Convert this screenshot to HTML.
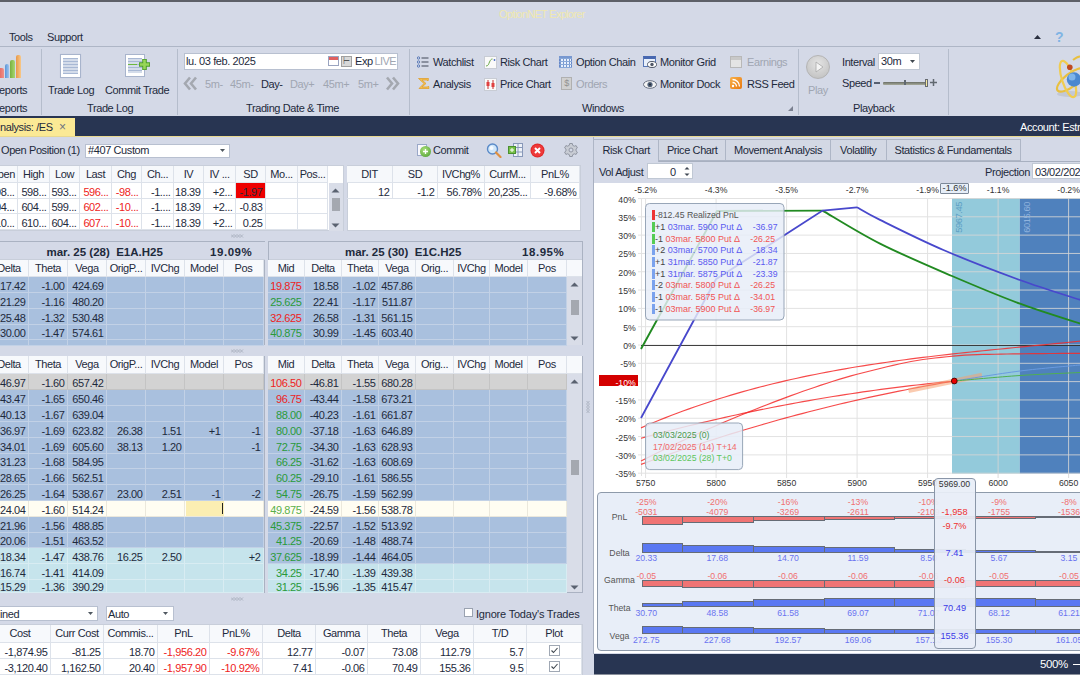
<!DOCTYPE html>
<html><head><meta charset="utf-8">
<style>
*{box-sizing:border-box;margin:0;padding:0}
html,body{width:1080px;height:675px;overflow:hidden;background:#d4d9e7;font-family:"Liberation Sans",sans-serif;font-size:11px;color:#1e2a3c;letter-spacing:-0.4px}
.a{position:absolute;white-space:nowrap}
.sep{position:absolute;width:1px;background:#b5bdcc}
.gl{position:absolute;color:#1e2a3c;font-size:11px}
.dis{color:#a0a6b2}
.c{position:absolute;overflow:hidden;white-space:nowrap}
.ch{letter-spacing:0;font-size:8.7px;line-height:10px}
</style></head><body>
<!-- top border -->
<div class="a" style="left:0;top:0;width:1080px;height:2px;background:#5d6068"></div>
<div class="a" style="left:499px;top:8px;color:#efe8b0;font-size:11px;letter-spacing:-0.7px">OptionNET Explorer</div>
<div class="a" style="left:9px;top:31px">Tools</div>
<div class="a" style="left:47px;top:31px">Support</div>
<div class="a" style="left:0;top:46px;width:1080px;height:1px;background:#aeb6c6"></div>

<!-- ribbon -->

<div class="sep" style="left:41px;top:49px;height:66px"></div>
<div class="sep" style="left:177px;top:49px;height:66px"></div>
<div class="sep" style="left:409px;top:49px;height:66px"></div>
<div class="sep" style="left:798px;top:49px;height:66px"></div>
<div class="sep" style="left:948px;top:49px;height:66px"></div>
<!-- Reports -->
<div class="a" style="left:-2px;top:68px;width:6px;height:10px;background:linear-gradient(90deg,#e0605a,#f09088);border-radius:2px 2px 0 0"></div>
<div class="a" style="left:5px;top:64px;width:4px;height:14px;background:linear-gradient(90deg,#5a94d8,#9cc4ee);border-radius:2px 2px 0 0"></div>
<div class="a" style="left:10px;top:60px;width:5px;height:18px;background:linear-gradient(90deg,#78b040,#a8d870);border-radius:2px 2px 0 0"></div>
<div class="a" style="left:16px;top:55px;width:5px;height:23px;background:linear-gradient(90deg,#e89848,#f8c888);border-radius:2px 2px 0 0"></div>
<div class="a" style="left:-1px;top:84px">eports</div>
<div class="a" style="left:-1px;top:102px">eports</div>
<!-- Trade Log -->
<div class="a" style="left:60px;top:54px;width:21px;height:24px;background:#fff;border:1px solid #a8b4cc;box-shadow:0 0 1px #c0c8d8"></div>
<div class="a" style="left:63px;top:58px;width:15px;height:16px;background:repeating-linear-gradient(180deg,#a8b8d4 0,#a8b8d4 1px,#d4dcea 1px,#d4dcea 3px)"></div>
<div class="a" style="left:48px;top:84px">Trade Log</div>
<div class="a" style="left:125px;top:54px;width:20px;height:23px;background:#fff;border:1px solid #a8b4cc"></div>
<div class="a" style="left:128px;top:58px;width:14px;height:15px;background:repeating-linear-gradient(180deg,#a8b8d4 0,#a8b8d4 1px,#d4dcea 1px,#d4dcea 3px)"></div>
<svg class="a" style="left:128px;top:55px" width="24" height="16"><path d="M0 9.5h9" stroke="#6cb83c" stroke-width="1"/><path d="M16.5 4v11M11 9.5h11" stroke="#4a9a2a" stroke-width="4.6"/><path d="M16.5 4.8v9.4M11.8 9.5h9.4" stroke="#98d658" stroke-width="2.6"/></svg>
<div class="a" style="left:105px;top:84px">Commit Trade</div>
<div class="a" style="left:87px;top:102px">Trade Log</div>
<!-- Date -->
<div class="a" style="left:184px;top:53px;width:214px;height:17px;background:#fff;border:1px solid #b8c0d0"></div>
<div class="a" style="left:186px;top:55px;color:#1e2a3c">lu. 03 feb. 2025</div>
<div class="a" style="left:328px;top:56px;width:11px;height:10px;background:linear-gradient(180deg,#e06060 0,#e06060 3px,#fff 3px);border:1px solid #9aa4c0"></div>
<div class="a" style="left:341px;top:56px;width:11px;height:11px;background:#d8d8d8;border:1px solid #a0a0a0;font-size:8px;line-height:9px;text-align:center;color:#555">⊢</div>
<div class="a" style="left:355px;top:55px">Exp</div>
<div class="a dis" style="left:374.5px;top:55px;letter-spacing:-0.6px">LIVE</div>
<svg class="a" style="left:183px;top:76px" width="15" height="15"><path d="M7 1.5L2 7.5l5 6M13 1.5L8 7.5l5 6" fill="none" stroke="#a4a8b0" stroke-width="2.6"/></svg>
<div class="a dis" style="left:205px;top:78px">5m-</div>
<div class="a dis" style="left:230px;top:78px">45m-</div>
<div class="a" style="left:261px;top:78px">Day-</div>
<div class="a dis" style="left:290px;top:78px">Day+</div>
<div class="a dis" style="left:323px;top:78px">45m+</div>
<div class="a dis" style="left:358px;top:78px">5m+</div>
<svg class="a" style="left:385px;top:76px" width="15" height="15"><path d="M2 1.5l5 6-5 6M8 1.5l5 6-5 6" fill="none" stroke="#a4a8b0" stroke-width="2.6"/></svg>
<div class="a" style="left:246px;top:102px">Trading Date &amp; Time</div>
<!-- Windows -->
<svg class="a" style="left:417px;top:56px" width="13" height="12"><circle cx="1.5" cy="2" r="1.2" fill="none" stroke="#5a7ab8"/><circle cx="1.5" cy="6" r="1.2" fill="none" stroke="#5a7ab8"/><circle cx="1.5" cy="10" r="1.2" fill="none" stroke="#5a7ab8"/><path d="M4.5 2h7M4.5 6h7M4.5 10h7" stroke="#404858" stroke-width="1.1"/></svg>
<div class="a" style="left:433px;top:56px">Watchlist</div>
<svg class="a" style="left:417px;top:77px" width="13" height="14"><path d="M1.5 1.5h10l-0.5 2.5-1-1h-5l4 3.5-4 3.5h5.5l1-1 0.5 2.5h-10l5-5z" fill="#f4c050" stroke="#e0a030" stroke-width="0.8"/></svg>
<div class="a" style="left:433px;top:78px">Analysis</div>
<div class="a" style="left:484px;top:56px;width:13px;height:13px;background:#fafafa;border:1px solid #c8ccd4"></div>
<svg class="a" style="left:484px;top:56px" width="13" height="13"><path d="M2 10c2.5 0 2.5-2 3.5-4s1.5-3 3-3" fill="none" stroke="#6aa848" stroke-width="1"/><circle cx="10.5" cy="4" r="0.9" fill="#4a6ac8"/></svg>
<div class="a" style="left:500px;top:56px">Risk Chart</div>
<div class="a" style="left:484px;top:78px;width:13px;height:13px;background:#fafafa;border:1px solid #c8ccd4"></div>
<svg class="a" style="left:484px;top:78px" width="13" height="13"><path d="M4 2v9M9 2v9" stroke="#c83030" stroke-width="1"/><rect x="2.5" y="4" width="3" height="4" fill="#e04040"/><rect x="7.5" y="5" width="3" height="4" fill="#e04040"/></svg>
<div class="a" style="left:500px;top:78px">Price Chart</div>
<div class="a" style="left:559px;top:56px;width:13px;height:12px;background:repeating-linear-gradient(90deg,#7898d0 0,#7898d0 1px,#e8f0fc 1px,#e8f0fc 3px);border:1px solid #6888c8"></div>
<div class="a" style="left:559px;top:56px;width:13px;height:12px;background:repeating-linear-gradient(180deg,#88a8d8 0,#88a8d8 1px,transparent 1px,transparent 3px);border-top:2px solid #7898d0"></div>
<div class="a" style="left:576px;top:56px">Option Chain</div>
<div class="a" style="left:561px;top:77px;width:11px;height:13px;background:#d0d0d0;border:1px solid #b0b0b0;font-size:9px;line-height:11px;text-align:center;color:#909090">$</div>
<div class="a dis" style="left:576px;top:78px">Orders</div>
<div class="a" style="left:643px;top:56px;width:13px;height:11px;background:#e8f0fc;border:1px solid #5878b8;border-top:3px solid #4868b0"></div>
<svg class="a" style="left:647px;top:61px" width="10" height="7"><ellipse cx="5" cy="3.5" rx="4.5" ry="3" fill="#fff" stroke="#505868"/><circle cx="5" cy="3.5" r="1.7" fill="#505868"/></svg>
<div class="a" style="left:660px;top:56px">Monitor Grid</div>
<svg class="a" style="left:643px;top:80px" width="14" height="9"><ellipse cx="7" cy="4.5" rx="6.5" ry="3.8" fill="#f4f4f4" stroke="#687080"/><circle cx="7" cy="4.5" r="2.6" fill="#506078"/><circle cx="7" cy="4.5" r="1" fill="#202830"/></svg>
<div class="a" style="left:660px;top:78px">Monitor Dock</div>
<div class="a" style="left:730px;top:56px;width:12px;height:12px;background:linear-gradient(180deg,#c8c8c8 0,#c8c8c8 3px,#e4e4e4 3px);border:1px solid #b8b8b8"></div>
<div class="a dis" style="left:747px;top:56px">Earnings</div>
<div class="a" style="left:730px;top:77px;width:12px;height:12px;background:linear-gradient(135deg,#f8b048,#e87810);border-radius:2px"></div>
<svg class="a" style="left:730px;top:77px" width="12" height="12"><circle cx="3" cy="9" r="1.2" fill="#fff"/><path d="M2.5 5.5a4 4 0 0 1 4 4M2.5 2.5a7 7 0 0 1 7 7" fill="none" stroke="#fff" stroke-width="1.3"/></svg>
<div class="a" style="left:747px;top:78px">RSS Feed</div>
<div class="a" style="left:582px;top:102px">Windows</div>
<svg class="a" style="left:788px;top:106px" width="6" height="6"><path d="M5 0v5h-5z" fill="#7a8090"/></svg>
<!-- Playback -->
<div class="a" style="left:806px;top:55px;width:24px;height:24px;border-radius:50%;background:radial-gradient(circle at 50% 35%,#e4e4e4,#bcbcbc);border:1px solid #b4b4b4"></div>
<svg class="a" style="left:806px;top:55px" width="24" height="24"><path d="M10 7l7 5-7 5z" fill="#f4f4f4" stroke="#a8a8a8" stroke-width="0.8"/></svg>
<div class="a dis" style="left:808px;top:84px">Play</div>
<div class="a" style="left:842px;top:56px">Interval</div>
<div class="a" style="left:878px;top:53px;width:42px;height:17px;background:#fff;border:1px solid #c0c8d4"></div>
<div class="a" style="left:881px;top:55px">30m</div>
<svg class="a" style="left:910px;top:60px" width="6" height="4"><path d="M0 0h5l-2.5 3z" fill="#404850"/></svg>
<div class="a" style="left:842px;top:77px">Speed</div>
<div class="a" style="left:874px;top:82px;width:6px;height:2px;background:#586070"></div>
<div class="a" style="left:883px;top:81.5px;width:43px;height:3px;background:linear-gradient(180deg,#6a6e66,#a8ac9c);border-radius:1px"></div>
<div class="a" style="left:904px;top:80px;width:2px;height:5px;background:#606870"></div>
<div class="a" style="left:925px;top:79px;width:3px;height:8px;background:#f4e8a0;border:1px solid #686c70"></div>
<svg class="a" style="left:930px;top:79px" width="7" height="7"><path d="M3.5 0v7M0 3.5h7" stroke="#606870" stroke-width="1.5"/></svg>
<div class="a" style="left:853px;top:102px">Playback</div>
<!-- logo -->
<svg class="a" style="left:1040px;top:50px" width="40" height="60">
<ellipse cx="30" cy="44" rx="13" ry="3" fill="#b8bcc8" opacity="0.6"/>
<ellipse cx="31" cy="30" rx="17" ry="6.5" fill="none" stroke="#e8c040" stroke-width="2.2" transform="rotate(-38 31 30)"/>
<ellipse cx="28" cy="29" rx="6" ry="19" fill="none" stroke="#f0cc50" stroke-width="2.2" transform="rotate(-18 28 29)"/>
<path d="M33 10 Q40 4 44 8" fill="none" stroke="#e8c040" stroke-width="2"/>
<circle cx="34" cy="29.5" r="7.2" fill="#4a88d0"/><circle cx="32" cy="27" r="3.5" fill="#8cc0f0" opacity="0.8"/>
<circle cx="29.8" cy="17.3" r="2.8" fill="#c04a20"/>
</svg>
<svg class="a" style="left:1034px;top:34.5px" width="7" height="4"><path d="M0 4l3.5-4 3.5 4z" fill="#2a3040"/></svg>
<div class="a" style="left:1055px;top:29px;color:#80b4e4;font-size:14px;font-weight:bold">?</div>


<!-- navy bar -->
<div class="a" style="left:0;top:116px;width:1080px;height:21px;background:#283552"></div>
<div class="a" style="left:0;top:136px;width:1080px;height:1px;background:#e8d890"></div>
<div class="a" style="left:0;top:118px;width:75px;height:18px;background:#fbe995"></div>
<div class="a" style="left:0;top:121px;color:#1e2a3c">nalysis: /ES</div>
<div class="a" style="left:59px;top:120px;color:#6b7080;font-size:12px">×</div>
<div class="a" style="left:1020px;top:121px;color:#fff">Account: Estr</div>

<div class="a" style="left:1px;top:144px">Open Position (1)</div>
<div class="a" style="left:85px;top:143.5px;width:145px;height:14px;background:#fff;border:1px solid #b8c0d0"></div>
<div class="a" style="left:88px;top:144px">#407 Custom</div>
<svg class="a" style="left:220px;top:149px" width="6" height="4"><path d="M0 0h5l-2.5 3z" fill="#505860"/></svg>
<div class="a" style="left:417px;top:143.5px;width:10px;height:12px;background:#f8f8fc;border:1px solid #9aa8c8"></div>
<div class="a" style="left:419.5px;top:146px;width:11px;height:11px;border-radius:50%;background:radial-gradient(circle at 40% 35%,#a8e078,#4a9a30)"></div>
<svg class="a" style="left:419.5px;top:146px" width="11" height="11"><path d="M5.5 3v5M3 5.5h5" stroke="#fff" stroke-width="1.3"/></svg>
<div class="a" style="left:433px;top:144px">Commit</div>
<svg class="a" style="left:486px;top:143px" width="16" height="15"><circle cx="6.5" cy="6" r="5" fill="#cfe6fa" stroke="#5a8ac8" stroke-width="1.4"/><circle cx="5.5" cy="5" r="2" fill="#fff" opacity="0.8"/><path d="M10 9.5l4.5 4.5" stroke="#e09040" stroke-width="2.2" stroke-linecap="round"/></svg>
<svg class="a" style="left:508px;top:143px" width="15" height="14"><rect x="5.5" y="0.5" width="9" height="13" fill="#eef2f8" stroke="#8898b8"/><path d="M5.5 4.5h9M5.5 9h9M10 0.5v13" stroke="#8898b8"/><rect x="0.5" y="3.5" width="7" height="7" fill="#78c048" stroke="#4a9030"/><path d="M4 5v4M2 7h4" stroke="#fff" stroke-width="1"/></svg>
<svg class="a" style="left:530px;top:143px" width="15" height="15"><circle cx="7.5" cy="7.5" r="7" fill="#e02828"/><circle cx="7.5" cy="7.5" r="6" fill="#ee3a3a"/><path d="M5 5l5 5M10 5l-5 5" stroke="#fff" stroke-width="2"/></svg>
<svg class="a" style="left:564px;top:143px" width="14" height="14"><g transform="translate(7 7)"><path d="M-1.3 -6.5h2.6l.4 1.8 1.6.9 1.8-.6 1.3 2.3-1.4 1.2v1.8l1.4 1.2-1.3 2.3-1.8-.6-1.6.9-.4 1.8h-2.6l-.4-1.8-1.6-.9-1.8.6-1.3-2.3 1.4-1.2v-1.8l-1.4-1.2 1.3-2.3 1.8.6 1.6-.9z" fill="#c8ccd4" stroke="#8a909c" stroke-width="0.9"/><circle r="2" fill="#d4d9e7" stroke="#8a909c" stroke-width="0.9"/></g></svg>
<div class="a" style="left:0;top:165px;width:343.5px;height:66px;background:#fff;border-top:1px solid #c8ceda;border-right:1px solid #c8ceda;border-bottom:1px solid #c8ceda"></div>
<div class="c" style="left:-12px;top:166px;width:30px;height:17px;line-height:19px;background:#f6f8fb;border-right:1px solid #dde2ea;border-bottom:1px solid #dde2ea;text-align:right;padding-right:2px;line-height:17px">pen</div>
<div class="c" style="left:18px;top:166px;width:32px;height:17px;line-height:19px;background:#f6f8fb;border-right:1px solid #dde2ea;border-bottom:1px solid #dde2ea;text-align:center;line-height:17px">High</div>
<div class="c" style="left:50px;top:166px;width:30px;height:17px;line-height:19px;background:#f6f8fb;border-right:1px solid #dde2ea;border-bottom:1px solid #dde2ea;text-align:center;line-height:17px">Low</div>
<div class="c" style="left:80px;top:166px;width:32px;height:17px;line-height:19px;background:#f6f8fb;border-right:1px solid #dde2ea;border-bottom:1px solid #dde2ea;text-align:center;line-height:17px">Last</div>
<div class="c" style="left:112px;top:166px;width:30px;height:17px;line-height:19px;background:#f6f8fb;border-right:1px solid #dde2ea;border-bottom:1px solid #dde2ea;text-align:center;line-height:17px">Chg</div>
<div class="c" style="left:142px;top:166px;width:32px;height:17px;line-height:19px;background:#f6f8fb;border-right:1px solid #dde2ea;border-bottom:1px solid #dde2ea;text-align:center;line-height:17px">Ch...</div>
<div class="c" style="left:174px;top:166px;width:30px;height:17px;line-height:19px;background:#f6f8fb;border-right:1px solid #dde2ea;border-bottom:1px solid #dde2ea;text-align:center;line-height:17px">IV</div>
<div class="c" style="left:204px;top:166px;width:32px;height:17px;line-height:19px;background:#f6f8fb;border-right:1px solid #dde2ea;border-bottom:1px solid #dde2ea;text-align:center;line-height:17px">IV ...</div>
<div class="c" style="left:236px;top:166px;width:30px;height:17px;line-height:19px;background:#f6f8fb;border-right:1px solid #dde2ea;border-bottom:1px solid #dde2ea;text-align:center;line-height:17px">SD</div>
<div class="c" style="left:266px;top:166px;width:32px;height:17px;line-height:19px;background:#f6f8fb;border-right:1px solid #dde2ea;border-bottom:1px solid #dde2ea;text-align:center;line-height:17px">Mo...</div>
<div class="c" style="left:298px;top:166px;width:30px;height:17px;line-height:19px;background:#f6f8fb;border-right:1px solid #dde2ea;border-bottom:1px solid #dde2ea;text-align:center;line-height:17px">Pos...</div>
<div class="c" style="left:-12px;top:183px;width:30px;height:16px;line-height:18px;border-right:1px solid #dde2ea;border-bottom:1px solid #dde2ea;text-align:right;padding-right:2.5px;">598...</div>
<div class="c" style="left:18px;top:183px;width:32px;height:16px;line-height:18px;border-right:1px solid #dde2ea;border-bottom:1px solid #dde2ea;text-align:right;padding-right:2.5px;">598...</div>
<div class="c" style="left:50px;top:183px;width:30px;height:16px;line-height:18px;border-right:1px solid #dde2ea;border-bottom:1px solid #dde2ea;text-align:right;padding-right:2.5px;">593...</div>
<div class="c" style="left:80px;top:183px;width:32px;height:16px;line-height:18px;border-right:1px solid #dde2ea;border-bottom:1px solid #dde2ea;text-align:right;padding-right:2.5px;color:#ee2222;">596...</div>
<div class="c" style="left:112px;top:183px;width:30px;height:16px;line-height:18px;border-right:1px solid #dde2ea;border-bottom:1px solid #dde2ea;text-align:right;padding-right:2.5px;color:#ee2222;">-98...</div>
<div class="c" style="left:142px;top:183px;width:32px;height:16px;line-height:18px;border-right:1px solid #dde2ea;border-bottom:1px solid #dde2ea;text-align:right;padding-right:2.5px;">-1....</div>
<div class="c" style="left:174px;top:183px;width:30px;height:16px;line-height:18px;border-right:1px solid #dde2ea;border-bottom:1px solid #dde2ea;text-align:right;padding-right:2.5px;">18.39</div>
<div class="c" style="left:204px;top:183px;width:32px;height:16px;line-height:18px;border-right:1px solid #dde2ea;border-bottom:1px solid #dde2ea;text-align:right;padding-right:2.5px;">+2...</div>
<div class="c" style="left:236px;top:183px;width:30px;height:16px;line-height:18px;background:#ee0000;border-right:1px solid #dde2ea;border-bottom:1px solid #dde2ea;text-align:right;padding-right:2.5px;">-1.97</div>
<div class="c" style="left:266px;top:183px;width:32px;height:16px;line-height:18px;border-right:1px solid #dde2ea;border-bottom:1px solid #dde2ea;text-align:right;padding-right:2.5px;"></div>
<div class="c" style="left:298px;top:183px;width:30px;height:16px;line-height:18px;border-right:1px solid #dde2ea;border-bottom:1px solid #dde2ea;text-align:right;padding-right:2.5px;"></div>
<div class="c" style="left:-12px;top:199px;width:30px;height:15px;line-height:17px;border-right:1px solid #dde2ea;border-bottom:1px solid #dde2ea;text-align:right;padding-right:2.5px;">604...</div>
<div class="c" style="left:18px;top:199px;width:32px;height:15px;line-height:17px;border-right:1px solid #dde2ea;border-bottom:1px solid #dde2ea;text-align:right;padding-right:2.5px;">604...</div>
<div class="c" style="left:50px;top:199px;width:30px;height:15px;line-height:17px;border-right:1px solid #dde2ea;border-bottom:1px solid #dde2ea;text-align:right;padding-right:2.5px;">599...</div>
<div class="c" style="left:80px;top:199px;width:32px;height:15px;line-height:17px;border-right:1px solid #dde2ea;border-bottom:1px solid #dde2ea;text-align:right;padding-right:2.5px;color:#ee2222;">602...</div>
<div class="c" style="left:112px;top:199px;width:30px;height:15px;line-height:17px;border-right:1px solid #dde2ea;border-bottom:1px solid #dde2ea;text-align:right;padding-right:2.5px;color:#ee2222;">-10...</div>
<div class="c" style="left:142px;top:199px;width:32px;height:15px;line-height:17px;border-right:1px solid #dde2ea;border-bottom:1px solid #dde2ea;text-align:right;padding-right:2.5px;">-1....</div>
<div class="c" style="left:174px;top:199px;width:30px;height:15px;line-height:17px;border-right:1px solid #dde2ea;border-bottom:1px solid #dde2ea;text-align:right;padding-right:2.5px;">18.39</div>
<div class="c" style="left:204px;top:199px;width:32px;height:15px;line-height:17px;border-right:1px solid #dde2ea;border-bottom:1px solid #dde2ea;text-align:right;padding-right:2.5px;">+2...</div>
<div class="c" style="left:236px;top:199px;width:30px;height:15px;line-height:17px;border-right:1px solid #dde2ea;border-bottom:1px solid #dde2ea;text-align:right;padding-right:2.5px;">-0.83</div>
<div class="c" style="left:266px;top:199px;width:32px;height:15px;line-height:17px;border-right:1px solid #dde2ea;border-bottom:1px solid #dde2ea;text-align:right;padding-right:2.5px;"></div>
<div class="c" style="left:298px;top:199px;width:30px;height:15px;line-height:17px;border-right:1px solid #dde2ea;border-bottom:1px solid #dde2ea;text-align:right;padding-right:2.5px;"></div>
<div class="c" style="left:-12px;top:214px;width:30px;height:16px;line-height:18px;border-right:1px solid #dde2ea;border-bottom:1px solid #dde2ea;text-align:right;padding-right:2.5px;">610...</div>
<div class="c" style="left:18px;top:214px;width:32px;height:16px;line-height:18px;border-right:1px solid #dde2ea;border-bottom:1px solid #dde2ea;text-align:right;padding-right:2.5px;">610...</div>
<div class="c" style="left:50px;top:214px;width:30px;height:16px;line-height:18px;border-right:1px solid #dde2ea;border-bottom:1px solid #dde2ea;text-align:right;padding-right:2.5px;">604...</div>
<div class="c" style="left:80px;top:214px;width:32px;height:16px;line-height:18px;border-right:1px solid #dde2ea;border-bottom:1px solid #dde2ea;text-align:right;padding-right:2.5px;color:#ee2222;">607...</div>
<div class="c" style="left:112px;top:214px;width:30px;height:16px;line-height:18px;border-right:1px solid #dde2ea;border-bottom:1px solid #dde2ea;text-align:right;padding-right:2.5px;color:#ee2222;">-10...</div>
<div class="c" style="left:142px;top:214px;width:32px;height:16px;line-height:18px;border-right:1px solid #dde2ea;border-bottom:1px solid #dde2ea;text-align:right;padding-right:2.5px;">-1....</div>
<div class="c" style="left:174px;top:214px;width:30px;height:16px;line-height:18px;border-right:1px solid #dde2ea;border-bottom:1px solid #dde2ea;text-align:right;padding-right:2.5px;">18.39</div>
<div class="c" style="left:204px;top:214px;width:32px;height:16px;line-height:18px;border-right:1px solid #dde2ea;border-bottom:1px solid #dde2ea;text-align:right;padding-right:2.5px;">+2...</div>
<div class="c" style="left:236px;top:214px;width:30px;height:16px;line-height:18px;border-right:1px solid #dde2ea;border-bottom:1px solid #dde2ea;text-align:right;padding-right:2.5px;">0.25</div>
<div class="c" style="left:266px;top:214px;width:32px;height:16px;line-height:18px;border-right:1px solid #dde2ea;border-bottom:1px solid #dde2ea;text-align:right;padding-right:2.5px;"></div>
<div class="c" style="left:298px;top:214px;width:30px;height:16px;line-height:18px;border-right:1px solid #dde2ea;border-bottom:1px solid #dde2ea;text-align:right;padding-right:2.5px;"></div>
<div class="a" style="left:328.5px;top:183px;width:14.5px;height:47.5px;background:#d9dde8"></div>
<svg class="a" style="left:331px;top:188px" width="9" height="5"><path d="M0.5 4.5l4-4 4 4z" fill="#5a6270"/></svg>
<div class="a" style="left:331.5px;top:198px;width:8px;height:13px;background:#a4a8b0"></div>
<svg class="a" style="left:331px;top:223px" width="9" height="5"><path d="M0.5 0.5l4 4 4-4z" fill="#5a6270"/></svg>
<div class="a" style="left:346.5px;top:165px;width:234px;height:66px;background:#fff;border:1px solid #c8ceda"></div>
<div class="c" style="left:347px;top:166px;width:46px;height:17px;line-height:19px;background:#f6f8fb;border-right:1px solid #dde2ea;border-bottom:1px solid #dde2ea;text-align:center;line-height:17px">DIT</div>
<div class="c" style="left:393px;top:166px;width:45px;height:17px;line-height:19px;background:#f6f8fb;border-right:1px solid #dde2ea;border-bottom:1px solid #dde2ea;text-align:center;line-height:17px">SD</div>
<div class="c" style="left:438px;top:166px;width:47px;height:17px;line-height:19px;background:#f6f8fb;border-right:1px solid #dde2ea;border-bottom:1px solid #dde2ea;text-align:center;line-height:17px">IVChg%</div>
<div class="c" style="left:485px;top:166px;width:46px;height:17px;line-height:19px;background:#f6f8fb;border-right:1px solid #dde2ea;border-bottom:1px solid #dde2ea;text-align:center;line-height:17px">CurrM...</div>
<div class="c" style="left:531px;top:166px;width:49px;height:17px;line-height:19px;background:#f6f8fb;border-right:1px solid #dde2ea;border-bottom:1px solid #dde2ea;text-align:center;line-height:17px">PnL%</div>
<div class="c" style="left:347px;top:183px;width:46px;height:16px;line-height:18px;border-right:1px solid #dde2ea;border-bottom:1px solid #dde2ea;text-align:right;padding-right:2.5px;">12</div>
<div class="c" style="left:393px;top:183px;width:45px;height:16px;line-height:18px;border-right:1px solid #dde2ea;border-bottom:1px solid #dde2ea;text-align:right;padding-right:2.5px;">-1.2</div>
<div class="c" style="left:438px;top:183px;width:47px;height:16px;line-height:18px;border-right:1px solid #dde2ea;border-bottom:1px solid #dde2ea;text-align:right;padding-right:2.5px;">56.78%</div>
<div class="c" style="left:485px;top:183px;width:46px;height:16px;line-height:18px;border-right:1px solid #dde2ea;border-bottom:1px solid #dde2ea;text-align:right;padding-right:2.5px;">20,235...</div>
<div class="c" style="left:531px;top:183px;width:49px;height:16px;line-height:18px;border-right:1px solid #dde2ea;border-bottom:1px solid #dde2ea;text-align:right;padding-right:2.5px;">-9.68%</div>
<svg class="a" style="left:231px;top:233.5px" width="13" height="4"><path d="M0 0.5l3 3M3 0.5l-3 3M3 0.5l3 3M6 0.5l-3 3M6 0.5l3 3M9 0.5l-3 3M9 0.5l3 3M12 0.5l-3 3" stroke="#a4acbb" stroke-width="0.8" fill="none"/></svg>
<svg class="a" style="left:231px;top:348.5px" width="13" height="4"><path d="M0 0.5l3 3M3 0.5l-3 3M3 0.5l3 3M6 0.5l-3 3M6 0.5l3 3M9 0.5l-3 3M9 0.5l3 3M12 0.5l-3 3" stroke="#a4acbb" stroke-width="0.8" fill="none"/></svg>
<svg class="a" style="left:231px;top:596.5px" width="13" height="4"><path d="M0 0.5l3 3M3 0.5l-3 3M3 0.5l3 3M6 0.5l-3 3M6 0.5l3 3M9 0.5l-3 3M9 0.5l3 3M12 0.5l-3 3" stroke="#a4acbb" stroke-width="0.8" fill="none"/></svg>
<svg class="a" style="left:586px;top:401px" width="4" height="13"><path d="M0.5 0l3 3M0.5 3l3 -3M0.5 3l3 3M0.5 6l3 -3M0.5 6l3 3M0.5 9l3 -3M0.5 9l3 3M0.5 12l3 -3" stroke="#a4acbb" stroke-width="0.8" fill="none"/></svg>
<div class="a" style="left:-2px;top:241.3px;width:267px;height:104.2px;border:1px solid #aab2c2;background:#fff"></div>
<div class="a" style="left:267.5px;top:241.3px;width:315px;height:104.2px;border:1px solid #aab2c2;background:#fff"></div>
<div class="a" style="left:0;top:242.3px;width:264.5px;height:18px;background:#d4d9e7;border-bottom:1px solid #c8ceda"></div>
<div class="a" style="left:268.5px;top:242.3px;width:313.5px;height:18px;background:#d4d9e7;border-bottom:1px solid #c8ceda"></div>
<div class="a" style="left:46.5px;top:245.5px;font-weight:bold;letter-spacing:0;font-size:11.5px">mar. 25 (28)&nbsp; E1A.H25</div>
<div class="a" style="left:210px;top:245.5px;font-weight:bold;letter-spacing:0.55px;font-size:11.5px">19.09%</div>
<div class="a" style="left:345px;top:245.5px;font-weight:bold;letter-spacing:0;font-size:11.5px">mar. 25 (30)&nbsp; E1C.H25</div>
<div class="a" style="left:522px;top:245.5px;font-weight:bold;letter-spacing:0.55px;font-size:11.5px">18.95%</div>
<div class="c" style="left:-10px;top:260px;width:39px;height:17px;line-height:19px;background:#f7f9fc;border-right:1px solid #dde2ea;border-bottom:1px solid #dde2ea;text-align:center;line-height:17px">Delta</div>
<div class="c" style="left:29px;top:260px;width:39px;height:17px;line-height:19px;background:#f7f9fc;border-right:1px solid #dde2ea;border-bottom:1px solid #dde2ea;text-align:center;line-height:17px">Theta</div>
<div class="c" style="left:68px;top:260px;width:39px;height:17px;line-height:19px;background:#f7f9fc;border-right:1px solid #dde2ea;border-bottom:1px solid #dde2ea;text-align:center;line-height:17px">Vega</div>
<div class="c" style="left:107px;top:260px;width:39px;height:17px;line-height:19px;background:#f7f9fc;border-right:1px solid #dde2ea;border-bottom:1px solid #dde2ea;text-align:center;line-height:17px">OrigP...</div>
<div class="c" style="left:146px;top:260px;width:39px;height:17px;line-height:19px;background:#f7f9fc;border-right:1px solid #dde2ea;border-bottom:1px solid #dde2ea;text-align:center;line-height:17px">IVChg</div>
<div class="c" style="left:185px;top:260px;width:39px;height:17px;line-height:19px;background:#f7f9fc;border-right:1px solid #dde2ea;border-bottom:1px solid #dde2ea;text-align:center;line-height:17px">Model</div>
<div class="c" style="left:224px;top:260px;width:40px;height:17px;line-height:19px;background:#f7f9fc;border-right:1px solid #dde2ea;border-bottom:1px solid #dde2ea;text-align:center;line-height:17px">Pos</div>
<div class="c" style="left:268px;top:260px;width:37px;height:17px;line-height:19px;background:#f7f9fc;border-right:1px solid #dde2ea;border-bottom:1px solid #dde2ea;text-align:center;line-height:17px">Mid</div>
<div class="c" style="left:305px;top:260px;width:37px;height:17px;line-height:19px;background:#f7f9fc;border-right:1px solid #dde2ea;border-bottom:1px solid #dde2ea;text-align:center;line-height:17px">Delta</div>
<div class="c" style="left:342px;top:260px;width:37px;height:17px;line-height:19px;background:#f7f9fc;border-right:1px solid #dde2ea;border-bottom:1px solid #dde2ea;text-align:center;line-height:17px">Theta</div>
<div class="c" style="left:379px;top:260px;width:37px;height:17px;line-height:19px;background:#f7f9fc;border-right:1px solid #dde2ea;border-bottom:1px solid #dde2ea;text-align:center;line-height:17px">Vega</div>
<div class="c" style="left:416px;top:260px;width:38px;height:17px;line-height:19px;background:#f7f9fc;border-right:1px solid #dde2ea;border-bottom:1px solid #dde2ea;text-align:center;line-height:17px">Orig...</div>
<div class="c" style="left:454px;top:260px;width:36px;height:17px;line-height:19px;background:#f7f9fc;border-right:1px solid #dde2ea;border-bottom:1px solid #dde2ea;text-align:center;line-height:17px">IVChg</div>
<div class="c" style="left:490px;top:260px;width:38px;height:17px;line-height:19px;background:#f7f9fc;border-right:1px solid #dde2ea;border-bottom:1px solid #dde2ea;text-align:center;line-height:17px">Model</div>
<div class="c" style="left:528px;top:260px;width:39px;height:17px;line-height:19px;background:#f7f9fc;border-right:1px solid #dde2ea;border-bottom:1px solid #dde2ea;text-align:center;line-height:17px">Pos</div>
<div class="c" style="left:567px;top:260px;width:15px;height:17px;line-height:19px;background:#f7f9fc;border-bottom:1px solid #dde2ea;text-align:center;"></div>
<div class="c" style="left:-10px;top:277px;width:39px;height:16px;line-height:18px;background:#a9c0de;border-right:1px solid #c2d1e6;border-bottom:1px solid #c2d1e6;text-align:right;padding-right:2.5px;">17.42</div>
<div class="c" style="left:29px;top:277px;width:39px;height:16px;line-height:18px;background:#a9c0de;border-right:1px solid #c2d1e6;border-bottom:1px solid #c2d1e6;text-align:right;padding-right:2.5px;">-1.00</div>
<div class="c" style="left:68px;top:277px;width:39px;height:16px;line-height:18px;background:#a9c0de;border-right:1px solid #c2d1e6;border-bottom:1px solid #c2d1e6;text-align:right;padding-right:2.5px;">424.69</div>
<div class="c" style="left:107px;top:277px;width:39px;height:16px;line-height:18px;background:#a9c0de;border-right:1px solid #c2d1e6;border-bottom:1px solid #c2d1e6;text-align:right;padding-right:2.5px;"></div>
<div class="c" style="left:146px;top:277px;width:39px;height:16px;line-height:18px;background:#a9c0de;border-right:1px solid #c2d1e6;border-bottom:1px solid #c2d1e6;text-align:right;padding-right:2.5px;"></div>
<div class="c" style="left:185px;top:277px;width:39px;height:16px;line-height:18px;background:#a9c0de;border-right:1px solid #c2d1e6;border-bottom:1px solid #c2d1e6;text-align:right;padding-right:2.5px;"></div>
<div class="c" style="left:224px;top:277px;width:40px;height:16px;line-height:18px;background:#a9c0de;border-right:1px solid #c2d1e6;border-bottom:1px solid #c2d1e6;text-align:right;padding-right:2.5px;"></div>
<div class="c" style="left:268px;top:277px;width:37px;height:16px;line-height:18px;background:#a9c0de;border-right:1px solid #c2d1e6;border-bottom:1px solid #c2d1e6;text-align:right;padding-right:2.5px;color:#ee2222;">19.875</div>
<div class="c" style="left:305px;top:277px;width:37px;height:16px;line-height:18px;background:#a9c0de;border-right:1px solid #c2d1e6;border-bottom:1px solid #c2d1e6;text-align:right;padding-right:2.5px;">18.58</div>
<div class="c" style="left:342px;top:277px;width:37px;height:16px;line-height:18px;background:#a9c0de;border-right:1px solid #c2d1e6;border-bottom:1px solid #c2d1e6;text-align:right;padding-right:2.5px;">-1.02</div>
<div class="c" style="left:379px;top:277px;width:37px;height:16px;line-height:18px;background:#a9c0de;border-right:1px solid #c2d1e6;border-bottom:1px solid #c2d1e6;text-align:right;padding-right:2.5px;">457.86</div>
<div class="c" style="left:416px;top:277px;width:38px;height:16px;line-height:18px;background:#a9c0de;border-right:1px solid #c2d1e6;border-bottom:1px solid #c2d1e6;text-align:right;padding-right:2.5px;"></div>
<div class="c" style="left:454px;top:277px;width:36px;height:16px;line-height:18px;background:#a9c0de;border-right:1px solid #c2d1e6;border-bottom:1px solid #c2d1e6;text-align:right;padding-right:2.5px;"></div>
<div class="c" style="left:490px;top:277px;width:38px;height:16px;line-height:18px;background:#a9c0de;border-right:1px solid #c2d1e6;border-bottom:1px solid #c2d1e6;text-align:right;padding-right:2.5px;"></div>
<div class="c" style="left:528px;top:277px;width:39px;height:16px;line-height:18px;background:#a9c0de;border-right:1px solid #c2d1e6;border-bottom:1px solid #c2d1e6;text-align:right;padding-right:2.5px;"></div>
<div class="c" style="left:-10px;top:293px;width:39px;height:16px;line-height:18px;background:#a9c0de;border-right:1px solid #c2d1e6;border-bottom:1px solid #c2d1e6;text-align:right;padding-right:2.5px;">21.29</div>
<div class="c" style="left:29px;top:293px;width:39px;height:16px;line-height:18px;background:#a9c0de;border-right:1px solid #c2d1e6;border-bottom:1px solid #c2d1e6;text-align:right;padding-right:2.5px;">-1.16</div>
<div class="c" style="left:68px;top:293px;width:39px;height:16px;line-height:18px;background:#a9c0de;border-right:1px solid #c2d1e6;border-bottom:1px solid #c2d1e6;text-align:right;padding-right:2.5px;">480.20</div>
<div class="c" style="left:107px;top:293px;width:39px;height:16px;line-height:18px;background:#a9c0de;border-right:1px solid #c2d1e6;border-bottom:1px solid #c2d1e6;text-align:right;padding-right:2.5px;"></div>
<div class="c" style="left:146px;top:293px;width:39px;height:16px;line-height:18px;background:#a9c0de;border-right:1px solid #c2d1e6;border-bottom:1px solid #c2d1e6;text-align:right;padding-right:2.5px;"></div>
<div class="c" style="left:185px;top:293px;width:39px;height:16px;line-height:18px;background:#a9c0de;border-right:1px solid #c2d1e6;border-bottom:1px solid #c2d1e6;text-align:right;padding-right:2.5px;"></div>
<div class="c" style="left:224px;top:293px;width:40px;height:16px;line-height:18px;background:#a9c0de;border-right:1px solid #c2d1e6;border-bottom:1px solid #c2d1e6;text-align:right;padding-right:2.5px;"></div>
<div class="c" style="left:268px;top:293px;width:37px;height:16px;line-height:18px;background:#a9c0de;border-right:1px solid #c2d1e6;border-bottom:1px solid #c2d1e6;text-align:right;padding-right:2.5px;color:#2a9a3a;">25.625</div>
<div class="c" style="left:305px;top:293px;width:37px;height:16px;line-height:18px;background:#a9c0de;border-right:1px solid #c2d1e6;border-bottom:1px solid #c2d1e6;text-align:right;padding-right:2.5px;">22.41</div>
<div class="c" style="left:342px;top:293px;width:37px;height:16px;line-height:18px;background:#a9c0de;border-right:1px solid #c2d1e6;border-bottom:1px solid #c2d1e6;text-align:right;padding-right:2.5px;">-1.17</div>
<div class="c" style="left:379px;top:293px;width:37px;height:16px;line-height:18px;background:#a9c0de;border-right:1px solid #c2d1e6;border-bottom:1px solid #c2d1e6;text-align:right;padding-right:2.5px;">511.87</div>
<div class="c" style="left:416px;top:293px;width:38px;height:16px;line-height:18px;background:#a9c0de;border-right:1px solid #c2d1e6;border-bottom:1px solid #c2d1e6;text-align:right;padding-right:2.5px;"></div>
<div class="c" style="left:454px;top:293px;width:36px;height:16px;line-height:18px;background:#a9c0de;border-right:1px solid #c2d1e6;border-bottom:1px solid #c2d1e6;text-align:right;padding-right:2.5px;"></div>
<div class="c" style="left:490px;top:293px;width:38px;height:16px;line-height:18px;background:#a9c0de;border-right:1px solid #c2d1e6;border-bottom:1px solid #c2d1e6;text-align:right;padding-right:2.5px;"></div>
<div class="c" style="left:528px;top:293px;width:39px;height:16px;line-height:18px;background:#a9c0de;border-right:1px solid #c2d1e6;border-bottom:1px solid #c2d1e6;text-align:right;padding-right:2.5px;"></div>
<div class="c" style="left:-10px;top:309px;width:39px;height:16px;line-height:18px;background:#a9c0de;border-right:1px solid #c2d1e6;border-bottom:1px solid #c2d1e6;text-align:right;padding-right:2.5px;">25.48</div>
<div class="c" style="left:29px;top:309px;width:39px;height:16px;line-height:18px;background:#a9c0de;border-right:1px solid #c2d1e6;border-bottom:1px solid #c2d1e6;text-align:right;padding-right:2.5px;">-1.32</div>
<div class="c" style="left:68px;top:309px;width:39px;height:16px;line-height:18px;background:#a9c0de;border-right:1px solid #c2d1e6;border-bottom:1px solid #c2d1e6;text-align:right;padding-right:2.5px;">530.48</div>
<div class="c" style="left:107px;top:309px;width:39px;height:16px;line-height:18px;background:#a9c0de;border-right:1px solid #c2d1e6;border-bottom:1px solid #c2d1e6;text-align:right;padding-right:2.5px;"></div>
<div class="c" style="left:146px;top:309px;width:39px;height:16px;line-height:18px;background:#a9c0de;border-right:1px solid #c2d1e6;border-bottom:1px solid #c2d1e6;text-align:right;padding-right:2.5px;"></div>
<div class="c" style="left:185px;top:309px;width:39px;height:16px;line-height:18px;background:#a9c0de;border-right:1px solid #c2d1e6;border-bottom:1px solid #c2d1e6;text-align:right;padding-right:2.5px;"></div>
<div class="c" style="left:224px;top:309px;width:40px;height:16px;line-height:18px;background:#a9c0de;border-right:1px solid #c2d1e6;border-bottom:1px solid #c2d1e6;text-align:right;padding-right:2.5px;"></div>
<div class="c" style="left:268px;top:309px;width:37px;height:16px;line-height:18px;background:#a9c0de;border-right:1px solid #c2d1e6;border-bottom:1px solid #c2d1e6;text-align:right;padding-right:2.5px;color:#ee2222;">32.625</div>
<div class="c" style="left:305px;top:309px;width:37px;height:16px;line-height:18px;background:#a9c0de;border-right:1px solid #c2d1e6;border-bottom:1px solid #c2d1e6;text-align:right;padding-right:2.5px;">26.58</div>
<div class="c" style="left:342px;top:309px;width:37px;height:16px;line-height:18px;background:#a9c0de;border-right:1px solid #c2d1e6;border-bottom:1px solid #c2d1e6;text-align:right;padding-right:2.5px;">-1.31</div>
<div class="c" style="left:379px;top:309px;width:37px;height:16px;line-height:18px;background:#a9c0de;border-right:1px solid #c2d1e6;border-bottom:1px solid #c2d1e6;text-align:right;padding-right:2.5px;">561.15</div>
<div class="c" style="left:416px;top:309px;width:38px;height:16px;line-height:18px;background:#a9c0de;border-right:1px solid #c2d1e6;border-bottom:1px solid #c2d1e6;text-align:right;padding-right:2.5px;"></div>
<div class="c" style="left:454px;top:309px;width:36px;height:16px;line-height:18px;background:#a9c0de;border-right:1px solid #c2d1e6;border-bottom:1px solid #c2d1e6;text-align:right;padding-right:2.5px;"></div>
<div class="c" style="left:490px;top:309px;width:38px;height:16px;line-height:18px;background:#a9c0de;border-right:1px solid #c2d1e6;border-bottom:1px solid #c2d1e6;text-align:right;padding-right:2.5px;"></div>
<div class="c" style="left:528px;top:309px;width:39px;height:16px;line-height:18px;background:#a9c0de;border-right:1px solid #c2d1e6;border-bottom:1px solid #c2d1e6;text-align:right;padding-right:2.5px;"></div>
<div class="c" style="left:-10px;top:325px;width:39px;height:15px;line-height:17px;background:#a9c0de;border-right:1px solid #c2d1e6;border-bottom:1px solid #c2d1e6;text-align:right;padding-right:2.5px;">30.00</div>
<div class="c" style="left:29px;top:325px;width:39px;height:15px;line-height:17px;background:#a9c0de;border-right:1px solid #c2d1e6;border-bottom:1px solid #c2d1e6;text-align:right;padding-right:2.5px;">-1.47</div>
<div class="c" style="left:68px;top:325px;width:39px;height:15px;line-height:17px;background:#a9c0de;border-right:1px solid #c2d1e6;border-bottom:1px solid #c2d1e6;text-align:right;padding-right:2.5px;">574.61</div>
<div class="c" style="left:107px;top:325px;width:39px;height:15px;line-height:17px;background:#a9c0de;border-right:1px solid #c2d1e6;border-bottom:1px solid #c2d1e6;text-align:right;padding-right:2.5px;"></div>
<div class="c" style="left:146px;top:325px;width:39px;height:15px;line-height:17px;background:#a9c0de;border-right:1px solid #c2d1e6;border-bottom:1px solid #c2d1e6;text-align:right;padding-right:2.5px;"></div>
<div class="c" style="left:185px;top:325px;width:39px;height:15px;line-height:17px;background:#a9c0de;border-right:1px solid #c2d1e6;border-bottom:1px solid #c2d1e6;text-align:right;padding-right:2.5px;"></div>
<div class="c" style="left:224px;top:325px;width:40px;height:15px;line-height:17px;background:#a9c0de;border-right:1px solid #c2d1e6;border-bottom:1px solid #c2d1e6;text-align:right;padding-right:2.5px;"></div>
<div class="c" style="left:268px;top:325px;width:37px;height:15px;line-height:17px;background:#a9c0de;border-right:1px solid #c2d1e6;border-bottom:1px solid #c2d1e6;text-align:right;padding-right:2.5px;color:#2a9a3a;">40.875</div>
<div class="c" style="left:305px;top:325px;width:37px;height:15px;line-height:17px;background:#a9c0de;border-right:1px solid #c2d1e6;border-bottom:1px solid #c2d1e6;text-align:right;padding-right:2.5px;">30.99</div>
<div class="c" style="left:342px;top:325px;width:37px;height:15px;line-height:17px;background:#a9c0de;border-right:1px solid #c2d1e6;border-bottom:1px solid #c2d1e6;text-align:right;padding-right:2.5px;">-1.45</div>
<div class="c" style="left:379px;top:325px;width:37px;height:15px;line-height:17px;background:#a9c0de;border-right:1px solid #c2d1e6;border-bottom:1px solid #c2d1e6;text-align:right;padding-right:2.5px;">603.40</div>
<div class="c" style="left:416px;top:325px;width:38px;height:15px;line-height:17px;background:#a9c0de;border-right:1px solid #c2d1e6;border-bottom:1px solid #c2d1e6;text-align:right;padding-right:2.5px;"></div>
<div class="c" style="left:454px;top:325px;width:36px;height:15px;line-height:17px;background:#a9c0de;border-right:1px solid #c2d1e6;border-bottom:1px solid #c2d1e6;text-align:right;padding-right:2.5px;"></div>
<div class="c" style="left:490px;top:325px;width:38px;height:15px;line-height:17px;background:#a9c0de;border-right:1px solid #c2d1e6;border-bottom:1px solid #c2d1e6;text-align:right;padding-right:2.5px;"></div>
<div class="c" style="left:528px;top:325px;width:39px;height:15px;line-height:17px;background:#a9c0de;border-right:1px solid #c2d1e6;border-bottom:1px solid #c2d1e6;text-align:right;padding-right:2.5px;"></div>
<div class="c" style="left:-10px;top:340px;width:39px;height:6px;line-height:8px;background:#a9c0de;border-right:1px solid #c2d1e6;border-bottom:1px solid #c2d1e6;text-align:right;padding-right:2.5px;"></div>
<div class="c" style="left:29px;top:340px;width:39px;height:6px;line-height:8px;background:#a9c0de;border-right:1px solid #c2d1e6;border-bottom:1px solid #c2d1e6;text-align:right;padding-right:2.5px;"></div>
<div class="c" style="left:68px;top:340px;width:39px;height:6px;line-height:8px;background:#a9c0de;border-right:1px solid #c2d1e6;border-bottom:1px solid #c2d1e6;text-align:right;padding-right:2.5px;"></div>
<div class="c" style="left:107px;top:340px;width:39px;height:6px;line-height:8px;background:#a9c0de;border-right:1px solid #c2d1e6;border-bottom:1px solid #c2d1e6;text-align:right;padding-right:2.5px;"></div>
<div class="c" style="left:146px;top:340px;width:39px;height:6px;line-height:8px;background:#a9c0de;border-right:1px solid #c2d1e6;border-bottom:1px solid #c2d1e6;text-align:right;padding-right:2.5px;"></div>
<div class="c" style="left:185px;top:340px;width:39px;height:6px;line-height:8px;background:#a9c0de;border-right:1px solid #c2d1e6;border-bottom:1px solid #c2d1e6;text-align:right;padding-right:2.5px;"></div>
<div class="c" style="left:224px;top:340px;width:40px;height:6px;line-height:8px;background:#a9c0de;border-right:1px solid #c2d1e6;border-bottom:1px solid #c2d1e6;text-align:right;padding-right:2.5px;"></div>
<div class="c" style="left:268px;top:340px;width:37px;height:6px;line-height:8px;background:#a9c0de;border-right:1px solid #c2d1e6;border-bottom:1px solid #c2d1e6;text-align:right;padding-right:2.5px;"></div>
<div class="c" style="left:305px;top:340px;width:37px;height:6px;line-height:8px;background:#a9c0de;border-right:1px solid #c2d1e6;border-bottom:1px solid #c2d1e6;text-align:right;padding-right:2.5px;"></div>
<div class="c" style="left:342px;top:340px;width:37px;height:6px;line-height:8px;background:#a9c0de;border-right:1px solid #c2d1e6;border-bottom:1px solid #c2d1e6;text-align:right;padding-right:2.5px;"></div>
<div class="c" style="left:379px;top:340px;width:37px;height:6px;line-height:8px;background:#a9c0de;border-right:1px solid #c2d1e6;border-bottom:1px solid #c2d1e6;text-align:right;padding-right:2.5px;"></div>
<div class="c" style="left:416px;top:340px;width:38px;height:6px;line-height:8px;background:#a9c0de;border-right:1px solid #c2d1e6;border-bottom:1px solid #c2d1e6;text-align:right;padding-right:2.5px;"></div>
<div class="c" style="left:454px;top:340px;width:36px;height:6px;line-height:8px;background:#a9c0de;border-right:1px solid #c2d1e6;border-bottom:1px solid #c2d1e6;text-align:right;padding-right:2.5px;"></div>
<div class="c" style="left:490px;top:340px;width:38px;height:6px;line-height:8px;background:#a9c0de;border-right:1px solid #c2d1e6;border-bottom:1px solid #c2d1e6;text-align:right;padding-right:2.5px;"></div>
<div class="c" style="left:528px;top:340px;width:39px;height:6px;line-height:8px;background:#a9c0de;border-right:1px solid #c2d1e6;border-bottom:1px solid #c2d1e6;text-align:right;padding-right:2.5px;"></div>
<div class="a" style="left:567px;top:277.2px;width:15px;height:67.8px;background:#d9dde8"></div>
<svg class="a" style="left:570px;top:282px" width="9" height="5"><path d="M0.5 4.5l4-4 4 4z" fill="#5a6270"/></svg>
<div class="a" style="left:570.5px;top:300px;width:8px;height:14.5px;background:#a4a8b0"></div>
<svg class="a" style="left:570px;top:336px" width="9" height="5"><path d="M0.5 0.5l4 4 4-4z" fill="#5a6270"/></svg>
<div class="a" style="left:-2px;top:356px;width:267px;height:237px;border:1px solid #aab2c2;background:#fff"></div>
<div class="a" style="left:267.5px;top:356px;width:315px;height:237px;border:1px solid #aab2c2;background:#fff"></div>
<div class="c" style="left:-10px;top:356px;width:39px;height:18px;line-height:20px;background:#f7f9fc;border-right:1px solid #dde2ea;border-bottom:1px solid #dde2ea;text-align:center;line-height:17px">Delta</div>
<div class="c" style="left:29px;top:356px;width:39px;height:18px;line-height:20px;background:#f7f9fc;border-right:1px solid #dde2ea;border-bottom:1px solid #dde2ea;text-align:center;line-height:17px">Theta</div>
<div class="c" style="left:68px;top:356px;width:39px;height:18px;line-height:20px;background:#f7f9fc;border-right:1px solid #dde2ea;border-bottom:1px solid #dde2ea;text-align:center;line-height:17px">Vega</div>
<div class="c" style="left:107px;top:356px;width:39px;height:18px;line-height:20px;background:#f7f9fc;border-right:1px solid #dde2ea;border-bottom:1px solid #dde2ea;text-align:center;line-height:17px">OrigP...</div>
<div class="c" style="left:146px;top:356px;width:39px;height:18px;line-height:20px;background:#f7f9fc;border-right:1px solid #dde2ea;border-bottom:1px solid #dde2ea;text-align:center;line-height:17px">IVChg</div>
<div class="c" style="left:185px;top:356px;width:39px;height:18px;line-height:20px;background:#f7f9fc;border-right:1px solid #dde2ea;border-bottom:1px solid #dde2ea;text-align:center;line-height:17px">Model</div>
<div class="c" style="left:224px;top:356px;width:40px;height:18px;line-height:20px;background:#f7f9fc;border-right:1px solid #dde2ea;border-bottom:1px solid #dde2ea;text-align:center;line-height:17px">Pos</div>
<div class="c" style="left:268px;top:356px;width:37px;height:18px;line-height:20px;background:#f7f9fc;border-right:1px solid #dde2ea;border-bottom:1px solid #dde2ea;text-align:center;line-height:17px">Mid</div>
<div class="c" style="left:305px;top:356px;width:37px;height:18px;line-height:20px;background:#f7f9fc;border-right:1px solid #dde2ea;border-bottom:1px solid #dde2ea;text-align:center;line-height:17px">Delta</div>
<div class="c" style="left:342px;top:356px;width:37px;height:18px;line-height:20px;background:#f7f9fc;border-right:1px solid #dde2ea;border-bottom:1px solid #dde2ea;text-align:center;line-height:17px">Theta</div>
<div class="c" style="left:379px;top:356px;width:37px;height:18px;line-height:20px;background:#f7f9fc;border-right:1px solid #dde2ea;border-bottom:1px solid #dde2ea;text-align:center;line-height:17px">Vega</div>
<div class="c" style="left:416px;top:356px;width:38px;height:18px;line-height:20px;background:#f7f9fc;border-right:1px solid #dde2ea;border-bottom:1px solid #dde2ea;text-align:center;line-height:17px">Orig...</div>
<div class="c" style="left:454px;top:356px;width:36px;height:18px;line-height:20px;background:#f7f9fc;border-right:1px solid #dde2ea;border-bottom:1px solid #dde2ea;text-align:center;line-height:17px">IVChg</div>
<div class="c" style="left:490px;top:356px;width:38px;height:18px;line-height:20px;background:#f7f9fc;border-right:1px solid #dde2ea;border-bottom:1px solid #dde2ea;text-align:center;line-height:17px">Model</div>
<div class="c" style="left:528px;top:356px;width:39px;height:18px;line-height:20px;background:#f7f9fc;border-right:1px solid #dde2ea;border-bottom:1px solid #dde2ea;text-align:center;line-height:17px">Pos</div>
<div class="c" style="left:567px;top:356px;width:15px;height:18px;line-height:20px;background:#f7f9fc;border-bottom:1px solid #dde2ea;text-align:center;"></div>
<div class="c" style="left:-10px;top:374px;width:39px;height:16px;line-height:18px;background:#d3d3d3;border-right:1px solid #c4c4c4;border-bottom:1px solid #c4c4c4;text-align:right;padding-right:2.5px;">-46.97</div>
<div class="c" style="left:29px;top:374px;width:39px;height:16px;line-height:18px;background:#d3d3d3;border-right:1px solid #c4c4c4;border-bottom:1px solid #c4c4c4;text-align:right;padding-right:2.5px;">-1.60</div>
<div class="c" style="left:68px;top:374px;width:39px;height:16px;line-height:18px;background:#d3d3d3;border-right:1px solid #c4c4c4;border-bottom:1px solid #c4c4c4;text-align:right;padding-right:2.5px;">657.42</div>
<div class="c" style="left:107px;top:374px;width:39px;height:16px;line-height:18px;background:#d3d3d3;border-right:1px solid #c4c4c4;border-bottom:1px solid #c4c4c4;text-align:right;padding-right:2.5px;"></div>
<div class="c" style="left:146px;top:374px;width:39px;height:16px;line-height:18px;background:#d3d3d3;border-right:1px solid #c4c4c4;border-bottom:1px solid #c4c4c4;text-align:right;padding-right:2.5px;"></div>
<div class="c" style="left:185px;top:374px;width:39px;height:16px;line-height:18px;background:#d3d3d3;border-right:1px solid #c4c4c4;border-bottom:1px solid #c4c4c4;text-align:right;padding-right:2.5px;"></div>
<div class="c" style="left:224px;top:374px;width:40px;height:16px;line-height:18px;background:#d3d3d3;border-right:1px solid #c4c4c4;border-bottom:1px solid #c4c4c4;text-align:right;padding-right:2.5px;"></div>
<div class="c" style="left:268px;top:374px;width:37px;height:16px;line-height:18px;background:#d3d3d3;border-right:1px solid #c4c4c4;border-bottom:1px solid #c4c4c4;text-align:right;padding-right:2.5px;color:#ee2222;">106.50</div>
<div class="c" style="left:305px;top:374px;width:37px;height:16px;line-height:18px;background:#d3d3d3;border-right:1px solid #c4c4c4;border-bottom:1px solid #c4c4c4;text-align:right;padding-right:2.5px;">-46.81</div>
<div class="c" style="left:342px;top:374px;width:37px;height:16px;line-height:18px;background:#d3d3d3;border-right:1px solid #c4c4c4;border-bottom:1px solid #c4c4c4;text-align:right;padding-right:2.5px;">-1.55</div>
<div class="c" style="left:379px;top:374px;width:37px;height:16px;line-height:18px;background:#d3d3d3;border-right:1px solid #c4c4c4;border-bottom:1px solid #c4c4c4;text-align:right;padding-right:2.5px;">680.28</div>
<div class="c" style="left:416px;top:374px;width:38px;height:16px;line-height:18px;background:#d3d3d3;border-right:1px solid #c4c4c4;border-bottom:1px solid #c4c4c4;text-align:right;padding-right:2.5px;"></div>
<div class="c" style="left:454px;top:374px;width:36px;height:16px;line-height:18px;background:#d3d3d3;border-right:1px solid #c4c4c4;border-bottom:1px solid #c4c4c4;text-align:right;padding-right:2.5px;"></div>
<div class="c" style="left:490px;top:374px;width:38px;height:16px;line-height:18px;background:#d3d3d3;border-right:1px solid #c4c4c4;border-bottom:1px solid #c4c4c4;text-align:right;padding-right:2.5px;"></div>
<div class="c" style="left:528px;top:374px;width:39px;height:16px;line-height:18px;background:#d3d3d3;border-right:1px solid #c4c4c4;border-bottom:1px solid #c4c4c4;text-align:right;padding-right:2.5px;"></div>
<div class="c" style="left:-10px;top:390px;width:39px;height:16px;line-height:18px;background:#a9c0de;border-right:1px solid #c2d1e6;border-bottom:1px solid #c2d1e6;text-align:right;padding-right:2.5px;">-43.47</div>
<div class="c" style="left:29px;top:390px;width:39px;height:16px;line-height:18px;background:#a9c0de;border-right:1px solid #c2d1e6;border-bottom:1px solid #c2d1e6;text-align:right;padding-right:2.5px;">-1.65</div>
<div class="c" style="left:68px;top:390px;width:39px;height:16px;line-height:18px;background:#a9c0de;border-right:1px solid #c2d1e6;border-bottom:1px solid #c2d1e6;text-align:right;padding-right:2.5px;">650.46</div>
<div class="c" style="left:107px;top:390px;width:39px;height:16px;line-height:18px;background:#a9c0de;border-right:1px solid #c2d1e6;border-bottom:1px solid #c2d1e6;text-align:right;padding-right:2.5px;"></div>
<div class="c" style="left:146px;top:390px;width:39px;height:16px;line-height:18px;background:#a9c0de;border-right:1px solid #c2d1e6;border-bottom:1px solid #c2d1e6;text-align:right;padding-right:2.5px;"></div>
<div class="c" style="left:185px;top:390px;width:39px;height:16px;line-height:18px;background:#a9c0de;border-right:1px solid #c2d1e6;border-bottom:1px solid #c2d1e6;text-align:right;padding-right:2.5px;"></div>
<div class="c" style="left:224px;top:390px;width:40px;height:16px;line-height:18px;background:#a9c0de;border-right:1px solid #c2d1e6;border-bottom:1px solid #c2d1e6;text-align:right;padding-right:2.5px;"></div>
<div class="c" style="left:268px;top:390px;width:37px;height:16px;line-height:18px;background:#a9c0de;border-right:1px solid #c2d1e6;border-bottom:1px solid #c2d1e6;text-align:right;padding-right:2.5px;color:#ee2222;">96.75</div>
<div class="c" style="left:305px;top:390px;width:37px;height:16px;line-height:18px;background:#a9c0de;border-right:1px solid #c2d1e6;border-bottom:1px solid #c2d1e6;text-align:right;padding-right:2.5px;">-43.44</div>
<div class="c" style="left:342px;top:390px;width:37px;height:16px;line-height:18px;background:#a9c0de;border-right:1px solid #c2d1e6;border-bottom:1px solid #c2d1e6;text-align:right;padding-right:2.5px;">-1.58</div>
<div class="c" style="left:379px;top:390px;width:37px;height:16px;line-height:18px;background:#a9c0de;border-right:1px solid #c2d1e6;border-bottom:1px solid #c2d1e6;text-align:right;padding-right:2.5px;">673.21</div>
<div class="c" style="left:416px;top:390px;width:38px;height:16px;line-height:18px;background:#a9c0de;border-right:1px solid #c2d1e6;border-bottom:1px solid #c2d1e6;text-align:right;padding-right:2.5px;"></div>
<div class="c" style="left:454px;top:390px;width:36px;height:16px;line-height:18px;background:#a9c0de;border-right:1px solid #c2d1e6;border-bottom:1px solid #c2d1e6;text-align:right;padding-right:2.5px;"></div>
<div class="c" style="left:490px;top:390px;width:38px;height:16px;line-height:18px;background:#a9c0de;border-right:1px solid #c2d1e6;border-bottom:1px solid #c2d1e6;text-align:right;padding-right:2.5px;"></div>
<div class="c" style="left:528px;top:390px;width:39px;height:16px;line-height:18px;background:#a9c0de;border-right:1px solid #c2d1e6;border-bottom:1px solid #c2d1e6;text-align:right;padding-right:2.5px;"></div>
<div class="c" style="left:-10px;top:406px;width:39px;height:16px;line-height:18px;background:#a9c0de;border-right:1px solid #c2d1e6;border-bottom:1px solid #c2d1e6;text-align:right;padding-right:2.5px;">-40.13</div>
<div class="c" style="left:29px;top:406px;width:39px;height:16px;line-height:18px;background:#a9c0de;border-right:1px solid #c2d1e6;border-bottom:1px solid #c2d1e6;text-align:right;padding-right:2.5px;">-1.67</div>
<div class="c" style="left:68px;top:406px;width:39px;height:16px;line-height:18px;background:#a9c0de;border-right:1px solid #c2d1e6;border-bottom:1px solid #c2d1e6;text-align:right;padding-right:2.5px;">639.04</div>
<div class="c" style="left:107px;top:406px;width:39px;height:16px;line-height:18px;background:#a9c0de;border-right:1px solid #c2d1e6;border-bottom:1px solid #c2d1e6;text-align:right;padding-right:2.5px;"></div>
<div class="c" style="left:146px;top:406px;width:39px;height:16px;line-height:18px;background:#a9c0de;border-right:1px solid #c2d1e6;border-bottom:1px solid #c2d1e6;text-align:right;padding-right:2.5px;"></div>
<div class="c" style="left:185px;top:406px;width:39px;height:16px;line-height:18px;background:#a9c0de;border-right:1px solid #c2d1e6;border-bottom:1px solid #c2d1e6;text-align:right;padding-right:2.5px;"></div>
<div class="c" style="left:224px;top:406px;width:40px;height:16px;line-height:18px;background:#a9c0de;border-right:1px solid #c2d1e6;border-bottom:1px solid #c2d1e6;text-align:right;padding-right:2.5px;"></div>
<div class="c" style="left:268px;top:406px;width:37px;height:16px;line-height:18px;background:#a9c0de;border-right:1px solid #c2d1e6;border-bottom:1px solid #c2d1e6;text-align:right;padding-right:2.5px;color:#2a9a3a;">88.00</div>
<div class="c" style="left:305px;top:406px;width:37px;height:16px;line-height:18px;background:#a9c0de;border-right:1px solid #c2d1e6;border-bottom:1px solid #c2d1e6;text-align:right;padding-right:2.5px;">-40.23</div>
<div class="c" style="left:342px;top:406px;width:37px;height:16px;line-height:18px;background:#a9c0de;border-right:1px solid #c2d1e6;border-bottom:1px solid #c2d1e6;text-align:right;padding-right:2.5px;">-1.61</div>
<div class="c" style="left:379px;top:406px;width:37px;height:16px;line-height:18px;background:#a9c0de;border-right:1px solid #c2d1e6;border-bottom:1px solid #c2d1e6;text-align:right;padding-right:2.5px;">661.87</div>
<div class="c" style="left:416px;top:406px;width:38px;height:16px;line-height:18px;background:#a9c0de;border-right:1px solid #c2d1e6;border-bottom:1px solid #c2d1e6;text-align:right;padding-right:2.5px;"></div>
<div class="c" style="left:454px;top:406px;width:36px;height:16px;line-height:18px;background:#a9c0de;border-right:1px solid #c2d1e6;border-bottom:1px solid #c2d1e6;text-align:right;padding-right:2.5px;"></div>
<div class="c" style="left:490px;top:406px;width:38px;height:16px;line-height:18px;background:#a9c0de;border-right:1px solid #c2d1e6;border-bottom:1px solid #c2d1e6;text-align:right;padding-right:2.5px;"></div>
<div class="c" style="left:528px;top:406px;width:39px;height:16px;line-height:18px;background:#a9c0de;border-right:1px solid #c2d1e6;border-bottom:1px solid #c2d1e6;text-align:right;padding-right:2.5px;"></div>
<div class="c" style="left:-10px;top:422px;width:39px;height:16px;line-height:18px;background:#a9c0de;border-right:1px solid #c2d1e6;border-bottom:1px solid #c2d1e6;text-align:right;padding-right:2.5px;">-36.97</div>
<div class="c" style="left:29px;top:422px;width:39px;height:16px;line-height:18px;background:#a9c0de;border-right:1px solid #c2d1e6;border-bottom:1px solid #c2d1e6;text-align:right;padding-right:2.5px;">-1.69</div>
<div class="c" style="left:68px;top:422px;width:39px;height:16px;line-height:18px;background:#a9c0de;border-right:1px solid #c2d1e6;border-bottom:1px solid #c2d1e6;text-align:right;padding-right:2.5px;">623.82</div>
<div class="c" style="left:107px;top:422px;width:39px;height:16px;line-height:18px;background:#a9c0de;border-right:1px solid #c2d1e6;border-bottom:1px solid #c2d1e6;text-align:right;padding-right:2.5px;">26.38</div>
<div class="c" style="left:146px;top:422px;width:39px;height:16px;line-height:18px;background:#a9c0de;border-right:1px solid #c2d1e6;border-bottom:1px solid #c2d1e6;text-align:right;padding-right:2.5px;">1.51</div>
<div class="c" style="left:185px;top:422px;width:39px;height:16px;line-height:18px;background:#a9c0de;border-right:1px solid #c2d1e6;border-bottom:1px solid #c2d1e6;text-align:right;padding-right:2.5px;">+1</div>
<div class="c" style="left:224px;top:422px;width:40px;height:16px;line-height:18px;background:#a9c0de;border-right:1px solid #c2d1e6;border-bottom:1px solid #c2d1e6;text-align:right;padding-right:2.5px;">-1</div>
<div class="c" style="left:268px;top:422px;width:37px;height:16px;line-height:18px;background:#a9c0de;border-right:1px solid #c2d1e6;border-bottom:1px solid #c2d1e6;text-align:right;padding-right:2.5px;color:#2a9a3a;">80.00</div>
<div class="c" style="left:305px;top:422px;width:37px;height:16px;line-height:18px;background:#a9c0de;border-right:1px solid #c2d1e6;border-bottom:1px solid #c2d1e6;text-align:right;padding-right:2.5px;">-37.18</div>
<div class="c" style="left:342px;top:422px;width:37px;height:16px;line-height:18px;background:#a9c0de;border-right:1px solid #c2d1e6;border-bottom:1px solid #c2d1e6;text-align:right;padding-right:2.5px;">-1.63</div>
<div class="c" style="left:379px;top:422px;width:37px;height:16px;line-height:18px;background:#a9c0de;border-right:1px solid #c2d1e6;border-bottom:1px solid #c2d1e6;text-align:right;padding-right:2.5px;">646.89</div>
<div class="c" style="left:416px;top:422px;width:38px;height:16px;line-height:18px;background:#a9c0de;border-right:1px solid #c2d1e6;border-bottom:1px solid #c2d1e6;text-align:right;padding-right:2.5px;"></div>
<div class="c" style="left:454px;top:422px;width:36px;height:16px;line-height:18px;background:#a9c0de;border-right:1px solid #c2d1e6;border-bottom:1px solid #c2d1e6;text-align:right;padding-right:2.5px;"></div>
<div class="c" style="left:490px;top:422px;width:38px;height:16px;line-height:18px;background:#a9c0de;border-right:1px solid #c2d1e6;border-bottom:1px solid #c2d1e6;text-align:right;padding-right:2.5px;"></div>
<div class="c" style="left:528px;top:422px;width:39px;height:16px;line-height:18px;background:#a9c0de;border-right:1px solid #c2d1e6;border-bottom:1px solid #c2d1e6;text-align:right;padding-right:2.5px;"></div>
<div class="c" style="left:-10px;top:438px;width:39px;height:16px;line-height:18px;background:#a9c0de;border-right:1px solid #c2d1e6;border-bottom:1px solid #c2d1e6;text-align:right;padding-right:2.5px;">-34.01</div>
<div class="c" style="left:29px;top:438px;width:39px;height:16px;line-height:18px;background:#a9c0de;border-right:1px solid #c2d1e6;border-bottom:1px solid #c2d1e6;text-align:right;padding-right:2.5px;">-1.69</div>
<div class="c" style="left:68px;top:438px;width:39px;height:16px;line-height:18px;background:#a9c0de;border-right:1px solid #c2d1e6;border-bottom:1px solid #c2d1e6;text-align:right;padding-right:2.5px;">605.60</div>
<div class="c" style="left:107px;top:438px;width:39px;height:16px;line-height:18px;background:#a9c0de;border-right:1px solid #c2d1e6;border-bottom:1px solid #c2d1e6;text-align:right;padding-right:2.5px;">38.13</div>
<div class="c" style="left:146px;top:438px;width:39px;height:16px;line-height:18px;background:#a9c0de;border-right:1px solid #c2d1e6;border-bottom:1px solid #c2d1e6;text-align:right;padding-right:2.5px;">1.20</div>
<div class="c" style="left:185px;top:438px;width:39px;height:16px;line-height:18px;background:#a9c0de;border-right:1px solid #c2d1e6;border-bottom:1px solid #c2d1e6;text-align:right;padding-right:2.5px;"></div>
<div class="c" style="left:224px;top:438px;width:40px;height:16px;line-height:18px;background:#a9c0de;border-right:1px solid #c2d1e6;border-bottom:1px solid #c2d1e6;text-align:right;padding-right:2.5px;">-1</div>
<div class="c" style="left:268px;top:438px;width:37px;height:16px;line-height:18px;background:#a9c0de;border-right:1px solid #c2d1e6;border-bottom:1px solid #c2d1e6;text-align:right;padding-right:2.5px;color:#2a9a3a;">72.75</div>
<div class="c" style="left:305px;top:438px;width:37px;height:16px;line-height:18px;background:#a9c0de;border-right:1px solid #c2d1e6;border-bottom:1px solid #c2d1e6;text-align:right;padding-right:2.5px;">-34.30</div>
<div class="c" style="left:342px;top:438px;width:37px;height:16px;line-height:18px;background:#a9c0de;border-right:1px solid #c2d1e6;border-bottom:1px solid #c2d1e6;text-align:right;padding-right:2.5px;">-1.63</div>
<div class="c" style="left:379px;top:438px;width:37px;height:16px;line-height:18px;background:#a9c0de;border-right:1px solid #c2d1e6;border-bottom:1px solid #c2d1e6;text-align:right;padding-right:2.5px;">628.93</div>
<div class="c" style="left:416px;top:438px;width:38px;height:16px;line-height:18px;background:#a9c0de;border-right:1px solid #c2d1e6;border-bottom:1px solid #c2d1e6;text-align:right;padding-right:2.5px;"></div>
<div class="c" style="left:454px;top:438px;width:36px;height:16px;line-height:18px;background:#a9c0de;border-right:1px solid #c2d1e6;border-bottom:1px solid #c2d1e6;text-align:right;padding-right:2.5px;"></div>
<div class="c" style="left:490px;top:438px;width:38px;height:16px;line-height:18px;background:#a9c0de;border-right:1px solid #c2d1e6;border-bottom:1px solid #c2d1e6;text-align:right;padding-right:2.5px;"></div>
<div class="c" style="left:528px;top:438px;width:39px;height:16px;line-height:18px;background:#a9c0de;border-right:1px solid #c2d1e6;border-bottom:1px solid #c2d1e6;text-align:right;padding-right:2.5px;"></div>
<div class="c" style="left:-10px;top:454px;width:39px;height:15px;line-height:17px;background:#a9c0de;border-right:1px solid #c2d1e6;border-bottom:1px solid #c2d1e6;text-align:right;padding-right:2.5px;">-31.23</div>
<div class="c" style="left:29px;top:454px;width:39px;height:15px;line-height:17px;background:#a9c0de;border-right:1px solid #c2d1e6;border-bottom:1px solid #c2d1e6;text-align:right;padding-right:2.5px;">-1.68</div>
<div class="c" style="left:68px;top:454px;width:39px;height:15px;line-height:17px;background:#a9c0de;border-right:1px solid #c2d1e6;border-bottom:1px solid #c2d1e6;text-align:right;padding-right:2.5px;">584.95</div>
<div class="c" style="left:107px;top:454px;width:39px;height:15px;line-height:17px;background:#a9c0de;border-right:1px solid #c2d1e6;border-bottom:1px solid #c2d1e6;text-align:right;padding-right:2.5px;"></div>
<div class="c" style="left:146px;top:454px;width:39px;height:15px;line-height:17px;background:#a9c0de;border-right:1px solid #c2d1e6;border-bottom:1px solid #c2d1e6;text-align:right;padding-right:2.5px;"></div>
<div class="c" style="left:185px;top:454px;width:39px;height:15px;line-height:17px;background:#a9c0de;border-right:1px solid #c2d1e6;border-bottom:1px solid #c2d1e6;text-align:right;padding-right:2.5px;"></div>
<div class="c" style="left:224px;top:454px;width:40px;height:15px;line-height:17px;background:#a9c0de;border-right:1px solid #c2d1e6;border-bottom:1px solid #c2d1e6;text-align:right;padding-right:2.5px;"></div>
<div class="c" style="left:268px;top:454px;width:37px;height:15px;line-height:17px;background:#a9c0de;border-right:1px solid #c2d1e6;border-bottom:1px solid #c2d1e6;text-align:right;padding-right:2.5px;color:#2a9a3a;">66.25</div>
<div class="c" style="left:305px;top:454px;width:37px;height:15px;line-height:17px;background:#a9c0de;border-right:1px solid #c2d1e6;border-bottom:1px solid #c2d1e6;text-align:right;padding-right:2.5px;">-31.62</div>
<div class="c" style="left:342px;top:454px;width:37px;height:15px;line-height:17px;background:#a9c0de;border-right:1px solid #c2d1e6;border-bottom:1px solid #c2d1e6;text-align:right;padding-right:2.5px;">-1.63</div>
<div class="c" style="left:379px;top:454px;width:37px;height:15px;line-height:17px;background:#a9c0de;border-right:1px solid #c2d1e6;border-bottom:1px solid #c2d1e6;text-align:right;padding-right:2.5px;">608.69</div>
<div class="c" style="left:416px;top:454px;width:38px;height:15px;line-height:17px;background:#a9c0de;border-right:1px solid #c2d1e6;border-bottom:1px solid #c2d1e6;text-align:right;padding-right:2.5px;"></div>
<div class="c" style="left:454px;top:454px;width:36px;height:15px;line-height:17px;background:#a9c0de;border-right:1px solid #c2d1e6;border-bottom:1px solid #c2d1e6;text-align:right;padding-right:2.5px;"></div>
<div class="c" style="left:490px;top:454px;width:38px;height:15px;line-height:17px;background:#a9c0de;border-right:1px solid #c2d1e6;border-bottom:1px solid #c2d1e6;text-align:right;padding-right:2.5px;"></div>
<div class="c" style="left:528px;top:454px;width:39px;height:15px;line-height:17px;background:#a9c0de;border-right:1px solid #c2d1e6;border-bottom:1px solid #c2d1e6;text-align:right;padding-right:2.5px;"></div>
<div class="c" style="left:-10px;top:469px;width:39px;height:16px;line-height:18px;background:#a9c0de;border-right:1px solid #c2d1e6;border-bottom:1px solid #c2d1e6;text-align:right;padding-right:2.5px;">-28.65</div>
<div class="c" style="left:29px;top:469px;width:39px;height:16px;line-height:18px;background:#a9c0de;border-right:1px solid #c2d1e6;border-bottom:1px solid #c2d1e6;text-align:right;padding-right:2.5px;">-1.66</div>
<div class="c" style="left:68px;top:469px;width:39px;height:16px;line-height:18px;background:#a9c0de;border-right:1px solid #c2d1e6;border-bottom:1px solid #c2d1e6;text-align:right;padding-right:2.5px;">562.51</div>
<div class="c" style="left:107px;top:469px;width:39px;height:16px;line-height:18px;background:#a9c0de;border-right:1px solid #c2d1e6;border-bottom:1px solid #c2d1e6;text-align:right;padding-right:2.5px;"></div>
<div class="c" style="left:146px;top:469px;width:39px;height:16px;line-height:18px;background:#a9c0de;border-right:1px solid #c2d1e6;border-bottom:1px solid #c2d1e6;text-align:right;padding-right:2.5px;"></div>
<div class="c" style="left:185px;top:469px;width:39px;height:16px;line-height:18px;background:#a9c0de;border-right:1px solid #c2d1e6;border-bottom:1px solid #c2d1e6;text-align:right;padding-right:2.5px;"></div>
<div class="c" style="left:224px;top:469px;width:40px;height:16px;line-height:18px;background:#a9c0de;border-right:1px solid #c2d1e6;border-bottom:1px solid #c2d1e6;text-align:right;padding-right:2.5px;"></div>
<div class="c" style="left:268px;top:469px;width:37px;height:16px;line-height:18px;background:#a9c0de;border-right:1px solid #c2d1e6;border-bottom:1px solid #c2d1e6;text-align:right;padding-right:2.5px;color:#2a9a3a;">60.25</div>
<div class="c" style="left:305px;top:469px;width:37px;height:16px;line-height:18px;background:#a9c0de;border-right:1px solid #c2d1e6;border-bottom:1px solid #c2d1e6;text-align:right;padding-right:2.5px;">-29.10</div>
<div class="c" style="left:342px;top:469px;width:37px;height:16px;line-height:18px;background:#a9c0de;border-right:1px solid #c2d1e6;border-bottom:1px solid #c2d1e6;text-align:right;padding-right:2.5px;">-1.61</div>
<div class="c" style="left:379px;top:469px;width:37px;height:16px;line-height:18px;background:#a9c0de;border-right:1px solid #c2d1e6;border-bottom:1px solid #c2d1e6;text-align:right;padding-right:2.5px;">586.55</div>
<div class="c" style="left:416px;top:469px;width:38px;height:16px;line-height:18px;background:#a9c0de;border-right:1px solid #c2d1e6;border-bottom:1px solid #c2d1e6;text-align:right;padding-right:2.5px;"></div>
<div class="c" style="left:454px;top:469px;width:36px;height:16px;line-height:18px;background:#a9c0de;border-right:1px solid #c2d1e6;border-bottom:1px solid #c2d1e6;text-align:right;padding-right:2.5px;"></div>
<div class="c" style="left:490px;top:469px;width:38px;height:16px;line-height:18px;background:#a9c0de;border-right:1px solid #c2d1e6;border-bottom:1px solid #c2d1e6;text-align:right;padding-right:2.5px;"></div>
<div class="c" style="left:528px;top:469px;width:39px;height:16px;line-height:18px;background:#a9c0de;border-right:1px solid #c2d1e6;border-bottom:1px solid #c2d1e6;text-align:right;padding-right:2.5px;"></div>
<div class="c" style="left:-10px;top:485px;width:39px;height:16px;line-height:18px;background:#a9c0de;border-right:1px solid #c2d1e6;border-bottom:1px solid #c2d1e6;text-align:right;padding-right:2.5px;">-26.25</div>
<div class="c" style="left:29px;top:485px;width:39px;height:16px;line-height:18px;background:#a9c0de;border-right:1px solid #c2d1e6;border-bottom:1px solid #c2d1e6;text-align:right;padding-right:2.5px;">-1.64</div>
<div class="c" style="left:68px;top:485px;width:39px;height:16px;line-height:18px;background:#a9c0de;border-right:1px solid #c2d1e6;border-bottom:1px solid #c2d1e6;text-align:right;padding-right:2.5px;">538.67</div>
<div class="c" style="left:107px;top:485px;width:39px;height:16px;line-height:18px;background:#a9c0de;border-right:1px solid #c2d1e6;border-bottom:1px solid #c2d1e6;text-align:right;padding-right:2.5px;">23.00</div>
<div class="c" style="left:146px;top:485px;width:39px;height:16px;line-height:18px;background:#a9c0de;border-right:1px solid #c2d1e6;border-bottom:1px solid #c2d1e6;text-align:right;padding-right:2.5px;">2.51</div>
<div class="c" style="left:185px;top:485px;width:39px;height:16px;line-height:18px;background:#a9c0de;border-right:1px solid #c2d1e6;border-bottom:1px solid #c2d1e6;text-align:right;padding-right:2.5px;">-1</div>
<div class="c" style="left:224px;top:485px;width:40px;height:16px;line-height:18px;background:#a9c0de;border-right:1px solid #c2d1e6;border-bottom:1px solid #c2d1e6;text-align:right;padding-right:2.5px;">-2</div>
<div class="c" style="left:268px;top:485px;width:37px;height:16px;line-height:18px;background:#a9c0de;border-right:1px solid #c2d1e6;border-bottom:1px solid #c2d1e6;text-align:right;padding-right:2.5px;color:#2a9a3a;">54.75</div>
<div class="c" style="left:305px;top:485px;width:37px;height:16px;line-height:18px;background:#a9c0de;border-right:1px solid #c2d1e6;border-bottom:1px solid #c2d1e6;text-align:right;padding-right:2.5px;">-26.75</div>
<div class="c" style="left:342px;top:485px;width:37px;height:16px;line-height:18px;background:#a9c0de;border-right:1px solid #c2d1e6;border-bottom:1px solid #c2d1e6;text-align:right;padding-right:2.5px;">-1.59</div>
<div class="c" style="left:379px;top:485px;width:37px;height:16px;line-height:18px;background:#a9c0de;border-right:1px solid #c2d1e6;border-bottom:1px solid #c2d1e6;text-align:right;padding-right:2.5px;">562.99</div>
<div class="c" style="left:416px;top:485px;width:38px;height:16px;line-height:18px;background:#a9c0de;border-right:1px solid #c2d1e6;border-bottom:1px solid #c2d1e6;text-align:right;padding-right:2.5px;"></div>
<div class="c" style="left:454px;top:485px;width:36px;height:16px;line-height:18px;background:#a9c0de;border-right:1px solid #c2d1e6;border-bottom:1px solid #c2d1e6;text-align:right;padding-right:2.5px;"></div>
<div class="c" style="left:490px;top:485px;width:38px;height:16px;line-height:18px;background:#a9c0de;border-right:1px solid #c2d1e6;border-bottom:1px solid #c2d1e6;text-align:right;padding-right:2.5px;"></div>
<div class="c" style="left:528px;top:485px;width:39px;height:16px;line-height:18px;background:#a9c0de;border-right:1px solid #c2d1e6;border-bottom:1px solid #c2d1e6;text-align:right;padding-right:2.5px;"></div>
<div class="c" style="left:-10px;top:501px;width:39px;height:16px;line-height:18px;background:#fffdf2;border-right:1px solid #ebe8dc;border-bottom:1px solid #ebe8dc;text-align:right;padding-right:2.5px;">-24.04</div>
<div class="c" style="left:29px;top:501px;width:39px;height:16px;line-height:18px;background:#fffdf2;border-right:1px solid #ebe8dc;border-bottom:1px solid #ebe8dc;text-align:right;padding-right:2.5px;">-1.60</div>
<div class="c" style="left:68px;top:501px;width:39px;height:16px;line-height:18px;background:#fffdf2;border-right:1px solid #ebe8dc;border-bottom:1px solid #ebe8dc;text-align:right;padding-right:2.5px;">514.24</div>
<div class="c" style="left:107px;top:501px;width:39px;height:16px;line-height:18px;background:#fffdf2;border-right:1px solid #ebe8dc;border-bottom:1px solid #ebe8dc;text-align:right;padding-right:2.5px;"></div>
<div class="c" style="left:146px;top:501px;width:39px;height:16px;line-height:18px;background:#fffdf2;border-right:1px solid #ebe8dc;border-bottom:1px solid #ebe8dc;text-align:right;padding-right:2.5px;"></div>
<div class="c" style="left:185px;top:501px;width:39px;height:16px;line-height:18px;background:#fffdf2;border-right:1px solid #ebe8dc;border-bottom:1px solid #ebe8dc;text-align:right;padding-right:2.5px;"></div>
<div class="c" style="left:224px;top:501px;width:40px;height:16px;line-height:18px;background:#fffdf2;border-right:1px solid #ebe8dc;border-bottom:1px solid #ebe8dc;text-align:right;padding-right:2.5px;"></div>
<div class="c" style="left:268px;top:501px;width:37px;height:16px;line-height:18px;background:#fffdf2;border-right:1px solid #ebe8dc;border-bottom:1px solid #ebe8dc;text-align:right;padding-right:2.5px;color:#5ab04a;">49.875</div>
<div class="c" style="left:305px;top:501px;width:37px;height:16px;line-height:18px;background:#fffdf2;border-right:1px solid #ebe8dc;border-bottom:1px solid #ebe8dc;text-align:right;padding-right:2.5px;">-24.59</div>
<div class="c" style="left:342px;top:501px;width:37px;height:16px;line-height:18px;background:#fffdf2;border-right:1px solid #ebe8dc;border-bottom:1px solid #ebe8dc;text-align:right;padding-right:2.5px;">-1.56</div>
<div class="c" style="left:379px;top:501px;width:37px;height:16px;line-height:18px;background:#fffdf2;border-right:1px solid #ebe8dc;border-bottom:1px solid #ebe8dc;text-align:right;padding-right:2.5px;">538.78</div>
<div class="c" style="left:416px;top:501px;width:38px;height:16px;line-height:18px;background:#fffdf2;border-right:1px solid #ebe8dc;border-bottom:1px solid #ebe8dc;text-align:right;padding-right:2.5px;"></div>
<div class="c" style="left:454px;top:501px;width:36px;height:16px;line-height:18px;background:#fffdf2;border-right:1px solid #ebe8dc;border-bottom:1px solid #ebe8dc;text-align:right;padding-right:2.5px;"></div>
<div class="c" style="left:490px;top:501px;width:38px;height:16px;line-height:18px;background:#fffdf2;border-right:1px solid #ebe8dc;border-bottom:1px solid #ebe8dc;text-align:right;padding-right:2.5px;"></div>
<div class="c" style="left:528px;top:501px;width:39px;height:16px;line-height:18px;background:#fffdf2;border-right:1px solid #ebe8dc;border-bottom:1px solid #ebe8dc;text-align:right;padding-right:2.5px;"></div>
<div class="c" style="left:-10px;top:517px;width:39px;height:16px;line-height:18px;background:#a9c0de;border-right:1px solid #c2d1e6;border-bottom:1px solid #c2d1e6;text-align:right;padding-right:2.5px;">-21.96</div>
<div class="c" style="left:29px;top:517px;width:39px;height:16px;line-height:18px;background:#a9c0de;border-right:1px solid #c2d1e6;border-bottom:1px solid #c2d1e6;text-align:right;padding-right:2.5px;">-1.56</div>
<div class="c" style="left:68px;top:517px;width:39px;height:16px;line-height:18px;background:#a9c0de;border-right:1px solid #c2d1e6;border-bottom:1px solid #c2d1e6;text-align:right;padding-right:2.5px;">488.85</div>
<div class="c" style="left:107px;top:517px;width:39px;height:16px;line-height:18px;background:#a9c0de;border-right:1px solid #c2d1e6;border-bottom:1px solid #c2d1e6;text-align:right;padding-right:2.5px;"></div>
<div class="c" style="left:146px;top:517px;width:39px;height:16px;line-height:18px;background:#a9c0de;border-right:1px solid #c2d1e6;border-bottom:1px solid #c2d1e6;text-align:right;padding-right:2.5px;"></div>
<div class="c" style="left:185px;top:517px;width:39px;height:16px;line-height:18px;background:#a9c0de;border-right:1px solid #c2d1e6;border-bottom:1px solid #c2d1e6;text-align:right;padding-right:2.5px;"></div>
<div class="c" style="left:224px;top:517px;width:40px;height:16px;line-height:18px;background:#a9c0de;border-right:1px solid #c2d1e6;border-bottom:1px solid #c2d1e6;text-align:right;padding-right:2.5px;"></div>
<div class="c" style="left:268px;top:517px;width:37px;height:16px;line-height:18px;background:#a9c0de;border-right:1px solid #c2d1e6;border-bottom:1px solid #c2d1e6;text-align:right;padding-right:2.5px;color:#2a9a3a;">45.375</div>
<div class="c" style="left:305px;top:517px;width:37px;height:16px;line-height:18px;background:#a9c0de;border-right:1px solid #c2d1e6;border-bottom:1px solid #c2d1e6;text-align:right;padding-right:2.5px;">-22.57</div>
<div class="c" style="left:342px;top:517px;width:37px;height:16px;line-height:18px;background:#a9c0de;border-right:1px solid #c2d1e6;border-bottom:1px solid #c2d1e6;text-align:right;padding-right:2.5px;">-1.52</div>
<div class="c" style="left:379px;top:517px;width:37px;height:16px;line-height:18px;background:#a9c0de;border-right:1px solid #c2d1e6;border-bottom:1px solid #c2d1e6;text-align:right;padding-right:2.5px;">513.92</div>
<div class="c" style="left:416px;top:517px;width:38px;height:16px;line-height:18px;background:#a9c0de;border-right:1px solid #c2d1e6;border-bottom:1px solid #c2d1e6;text-align:right;padding-right:2.5px;"></div>
<div class="c" style="left:454px;top:517px;width:36px;height:16px;line-height:18px;background:#a9c0de;border-right:1px solid #c2d1e6;border-bottom:1px solid #c2d1e6;text-align:right;padding-right:2.5px;"></div>
<div class="c" style="left:490px;top:517px;width:38px;height:16px;line-height:18px;background:#a9c0de;border-right:1px solid #c2d1e6;border-bottom:1px solid #c2d1e6;text-align:right;padding-right:2.5px;"></div>
<div class="c" style="left:528px;top:517px;width:39px;height:16px;line-height:18px;background:#a9c0de;border-right:1px solid #c2d1e6;border-bottom:1px solid #c2d1e6;text-align:right;padding-right:2.5px;"></div>
<div class="c" style="left:-10px;top:533px;width:39px;height:15px;line-height:17px;background:#a9c0de;border-right:1px solid #c2d1e6;border-bottom:1px solid #c2d1e6;text-align:right;padding-right:2.5px;">-20.06</div>
<div class="c" style="left:29px;top:533px;width:39px;height:15px;line-height:17px;background:#a9c0de;border-right:1px solid #c2d1e6;border-bottom:1px solid #c2d1e6;text-align:right;padding-right:2.5px;">-1.51</div>
<div class="c" style="left:68px;top:533px;width:39px;height:15px;line-height:17px;background:#a9c0de;border-right:1px solid #c2d1e6;border-bottom:1px solid #c2d1e6;text-align:right;padding-right:2.5px;">463.52</div>
<div class="c" style="left:107px;top:533px;width:39px;height:15px;line-height:17px;background:#a9c0de;border-right:1px solid #c2d1e6;border-bottom:1px solid #c2d1e6;text-align:right;padding-right:2.5px;"></div>
<div class="c" style="left:146px;top:533px;width:39px;height:15px;line-height:17px;background:#a9c0de;border-right:1px solid #c2d1e6;border-bottom:1px solid #c2d1e6;text-align:right;padding-right:2.5px;"></div>
<div class="c" style="left:185px;top:533px;width:39px;height:15px;line-height:17px;background:#a9c0de;border-right:1px solid #c2d1e6;border-bottom:1px solid #c2d1e6;text-align:right;padding-right:2.5px;"></div>
<div class="c" style="left:224px;top:533px;width:40px;height:15px;line-height:17px;background:#a9c0de;border-right:1px solid #c2d1e6;border-bottom:1px solid #c2d1e6;text-align:right;padding-right:2.5px;"></div>
<div class="c" style="left:268px;top:533px;width:37px;height:15px;line-height:17px;background:#a9c0de;border-right:1px solid #c2d1e6;border-bottom:1px solid #c2d1e6;text-align:right;padding-right:2.5px;color:#2a9a3a;">41.25</div>
<div class="c" style="left:305px;top:533px;width:37px;height:15px;line-height:17px;background:#a9c0de;border-right:1px solid #c2d1e6;border-bottom:1px solid #c2d1e6;text-align:right;padding-right:2.5px;">-20.69</div>
<div class="c" style="left:342px;top:533px;width:37px;height:15px;line-height:17px;background:#a9c0de;border-right:1px solid #c2d1e6;border-bottom:1px solid #c2d1e6;text-align:right;padding-right:2.5px;">-1.48</div>
<div class="c" style="left:379px;top:533px;width:37px;height:15px;line-height:17px;background:#a9c0de;border-right:1px solid #c2d1e6;border-bottom:1px solid #c2d1e6;text-align:right;padding-right:2.5px;">488.74</div>
<div class="c" style="left:416px;top:533px;width:38px;height:15px;line-height:17px;background:#a9c0de;border-right:1px solid #c2d1e6;border-bottom:1px solid #c2d1e6;text-align:right;padding-right:2.5px;"></div>
<div class="c" style="left:454px;top:533px;width:36px;height:15px;line-height:17px;background:#a9c0de;border-right:1px solid #c2d1e6;border-bottom:1px solid #c2d1e6;text-align:right;padding-right:2.5px;"></div>
<div class="c" style="left:490px;top:533px;width:38px;height:15px;line-height:17px;background:#a9c0de;border-right:1px solid #c2d1e6;border-bottom:1px solid #c2d1e6;text-align:right;padding-right:2.5px;"></div>
<div class="c" style="left:528px;top:533px;width:39px;height:15px;line-height:17px;background:#a9c0de;border-right:1px solid #c2d1e6;border-bottom:1px solid #c2d1e6;text-align:right;padding-right:2.5px;"></div>
<div class="c" style="left:-10px;top:548px;width:39px;height:16px;line-height:18px;background:#c6e4ec;border-right:1px solid #d8ecf2;border-bottom:1px solid #d8ecf2;text-align:right;padding-right:2.5px;">-18.34</div>
<div class="c" style="left:29px;top:548px;width:39px;height:16px;line-height:18px;background:#c6e4ec;border-right:1px solid #d8ecf2;border-bottom:1px solid #d8ecf2;text-align:right;padding-right:2.5px;">-1.47</div>
<div class="c" style="left:68px;top:548px;width:39px;height:16px;line-height:18px;background:#c6e4ec;border-right:1px solid #d8ecf2;border-bottom:1px solid #d8ecf2;text-align:right;padding-right:2.5px;">438.76</div>
<div class="c" style="left:107px;top:548px;width:39px;height:16px;line-height:18px;background:#c6e4ec;border-right:1px solid #d8ecf2;border-bottom:1px solid #d8ecf2;text-align:right;padding-right:2.5px;">16.25</div>
<div class="c" style="left:146px;top:548px;width:39px;height:16px;line-height:18px;background:#c6e4ec;border-right:1px solid #d8ecf2;border-bottom:1px solid #d8ecf2;text-align:right;padding-right:2.5px;">2.50</div>
<div class="c" style="left:185px;top:548px;width:39px;height:16px;line-height:18px;background:#c6e4ec;border-right:1px solid #d8ecf2;border-bottom:1px solid #d8ecf2;text-align:right;padding-right:2.5px;"></div>
<div class="c" style="left:224px;top:548px;width:40px;height:16px;line-height:18px;background:#c6e4ec;border-right:1px solid #d8ecf2;border-bottom:1px solid #d8ecf2;text-align:right;padding-right:2.5px;">+2</div>
<div class="c" style="left:268px;top:548px;width:37px;height:16px;line-height:18px;background:#a9c0de;border-right:1px solid #c2d1e6;border-bottom:1px solid #c2d1e6;text-align:right;padding-right:2.5px;color:#2a9a3a;">37.625</div>
<div class="c" style="left:305px;top:548px;width:37px;height:16px;line-height:18px;background:#a9c0de;border-right:1px solid #c2d1e6;border-bottom:1px solid #c2d1e6;text-align:right;padding-right:2.5px;">-18.99</div>
<div class="c" style="left:342px;top:548px;width:37px;height:16px;line-height:18px;background:#a9c0de;border-right:1px solid #c2d1e6;border-bottom:1px solid #c2d1e6;text-align:right;padding-right:2.5px;">-1.44</div>
<div class="c" style="left:379px;top:548px;width:37px;height:16px;line-height:18px;background:#a9c0de;border-right:1px solid #c2d1e6;border-bottom:1px solid #c2d1e6;text-align:right;padding-right:2.5px;">464.05</div>
<div class="c" style="left:416px;top:548px;width:38px;height:16px;line-height:18px;background:#a9c0de;border-right:1px solid #c2d1e6;border-bottom:1px solid #c2d1e6;text-align:right;padding-right:2.5px;"></div>
<div class="c" style="left:454px;top:548px;width:36px;height:16px;line-height:18px;background:#a9c0de;border-right:1px solid #c2d1e6;border-bottom:1px solid #c2d1e6;text-align:right;padding-right:2.5px;"></div>
<div class="c" style="left:490px;top:548px;width:38px;height:16px;line-height:18px;background:#a9c0de;border-right:1px solid #c2d1e6;border-bottom:1px solid #c2d1e6;text-align:right;padding-right:2.5px;"></div>
<div class="c" style="left:528px;top:548px;width:39px;height:16px;line-height:18px;background:#a9c0de;border-right:1px solid #c2d1e6;border-bottom:1px solid #c2d1e6;text-align:right;padding-right:2.5px;"></div>
<div class="c" style="left:-10px;top:564px;width:39px;height:16px;line-height:18px;background:#c6e4ec;border-right:1px solid #d8ecf2;border-bottom:1px solid #d8ecf2;text-align:right;padding-right:2.5px;">-16.74</div>
<div class="c" style="left:29px;top:564px;width:39px;height:16px;line-height:18px;background:#c6e4ec;border-right:1px solid #d8ecf2;border-bottom:1px solid #d8ecf2;text-align:right;padding-right:2.5px;">-1.41</div>
<div class="c" style="left:68px;top:564px;width:39px;height:16px;line-height:18px;background:#c6e4ec;border-right:1px solid #d8ecf2;border-bottom:1px solid #d8ecf2;text-align:right;padding-right:2.5px;">414.09</div>
<div class="c" style="left:107px;top:564px;width:39px;height:16px;line-height:18px;background:#c6e4ec;border-right:1px solid #d8ecf2;border-bottom:1px solid #d8ecf2;text-align:right;padding-right:2.5px;"></div>
<div class="c" style="left:146px;top:564px;width:39px;height:16px;line-height:18px;background:#c6e4ec;border-right:1px solid #d8ecf2;border-bottom:1px solid #d8ecf2;text-align:right;padding-right:2.5px;"></div>
<div class="c" style="left:185px;top:564px;width:39px;height:16px;line-height:18px;background:#c6e4ec;border-right:1px solid #d8ecf2;border-bottom:1px solid #d8ecf2;text-align:right;padding-right:2.5px;"></div>
<div class="c" style="left:224px;top:564px;width:40px;height:16px;line-height:18px;background:#c6e4ec;border-right:1px solid #d8ecf2;border-bottom:1px solid #d8ecf2;text-align:right;padding-right:2.5px;"></div>
<div class="c" style="left:268px;top:564px;width:37px;height:16px;line-height:18px;background:#c6e4ec;border-right:1px solid #d8ecf2;border-bottom:1px solid #d8ecf2;text-align:right;padding-right:2.5px;color:#2a9a3a;">34.25</div>
<div class="c" style="left:305px;top:564px;width:37px;height:16px;line-height:18px;background:#c6e4ec;border-right:1px solid #d8ecf2;border-bottom:1px solid #d8ecf2;text-align:right;padding-right:2.5px;">-17.40</div>
<div class="c" style="left:342px;top:564px;width:37px;height:16px;line-height:18px;background:#c6e4ec;border-right:1px solid #d8ecf2;border-bottom:1px solid #d8ecf2;text-align:right;padding-right:2.5px;">-1.39</div>
<div class="c" style="left:379px;top:564px;width:37px;height:16px;line-height:18px;background:#c6e4ec;border-right:1px solid #d8ecf2;border-bottom:1px solid #d8ecf2;text-align:right;padding-right:2.5px;">439.38</div>
<div class="c" style="left:416px;top:564px;width:38px;height:16px;line-height:18px;background:#c6e4ec;border-right:1px solid #d8ecf2;border-bottom:1px solid #d8ecf2;text-align:right;padding-right:2.5px;"></div>
<div class="c" style="left:454px;top:564px;width:36px;height:16px;line-height:18px;background:#c6e4ec;border-right:1px solid #d8ecf2;border-bottom:1px solid #d8ecf2;text-align:right;padding-right:2.5px;"></div>
<div class="c" style="left:490px;top:564px;width:38px;height:16px;line-height:18px;background:#c6e4ec;border-right:1px solid #d8ecf2;border-bottom:1px solid #d8ecf2;text-align:right;padding-right:2.5px;"></div>
<div class="c" style="left:528px;top:564px;width:39px;height:16px;line-height:18px;background:#c6e4ec;border-right:1px solid #d8ecf2;border-bottom:1px solid #d8ecf2;text-align:right;padding-right:2.5px;"></div>
<div class="c" style="left:-10px;top:580px;width:39px;height:13px;line-height:15px;background:#c6e4ec;border-right:1px solid #d8ecf2;border-bottom:1px solid #d8ecf2;text-align:right;padding-right:2.5px;">-15.29</div>
<div class="c" style="left:29px;top:580px;width:39px;height:13px;line-height:15px;background:#c6e4ec;border-right:1px solid #d8ecf2;border-bottom:1px solid #d8ecf2;text-align:right;padding-right:2.5px;">-1.36</div>
<div class="c" style="left:68px;top:580px;width:39px;height:13px;line-height:15px;background:#c6e4ec;border-right:1px solid #d8ecf2;border-bottom:1px solid #d8ecf2;text-align:right;padding-right:2.5px;">390.29</div>
<div class="c" style="left:107px;top:580px;width:39px;height:13px;line-height:15px;background:#c6e4ec;border-right:1px solid #d8ecf2;border-bottom:1px solid #d8ecf2;text-align:right;padding-right:2.5px;"></div>
<div class="c" style="left:146px;top:580px;width:39px;height:13px;line-height:15px;background:#c6e4ec;border-right:1px solid #d8ecf2;border-bottom:1px solid #d8ecf2;text-align:right;padding-right:2.5px;"></div>
<div class="c" style="left:185px;top:580px;width:39px;height:13px;line-height:15px;background:#c6e4ec;border-right:1px solid #d8ecf2;border-bottom:1px solid #d8ecf2;text-align:right;padding-right:2.5px;"></div>
<div class="c" style="left:224px;top:580px;width:40px;height:13px;line-height:15px;background:#c6e4ec;border-right:1px solid #d8ecf2;border-bottom:1px solid #d8ecf2;text-align:right;padding-right:2.5px;"></div>
<div class="c" style="left:268px;top:580px;width:37px;height:13px;line-height:15px;background:#c6e4ec;border-right:1px solid #d8ecf2;border-bottom:1px solid #d8ecf2;text-align:right;padding-right:2.5px;color:#2a9a3a;">31.25</div>
<div class="c" style="left:305px;top:580px;width:37px;height:13px;line-height:15px;background:#c6e4ec;border-right:1px solid #d8ecf2;border-bottom:1px solid #d8ecf2;text-align:right;padding-right:2.5px;">-15.96</div>
<div class="c" style="left:342px;top:580px;width:37px;height:13px;line-height:15px;background:#c6e4ec;border-right:1px solid #d8ecf2;border-bottom:1px solid #d8ecf2;text-align:right;padding-right:2.5px;">-1.35</div>
<div class="c" style="left:379px;top:580px;width:37px;height:13px;line-height:15px;background:#c6e4ec;border-right:1px solid #d8ecf2;border-bottom:1px solid #d8ecf2;text-align:right;padding-right:2.5px;">415.47</div>
<div class="c" style="left:416px;top:580px;width:38px;height:13px;line-height:15px;background:#c6e4ec;border-right:1px solid #d8ecf2;border-bottom:1px solid #d8ecf2;text-align:right;padding-right:2.5px;"></div>
<div class="c" style="left:454px;top:580px;width:36px;height:13px;line-height:15px;background:#c6e4ec;border-right:1px solid #d8ecf2;border-bottom:1px solid #d8ecf2;text-align:right;padding-right:2.5px;"></div>
<div class="c" style="left:490px;top:580px;width:38px;height:13px;line-height:15px;background:#c6e4ec;border-right:1px solid #d8ecf2;border-bottom:1px solid #d8ecf2;text-align:right;padding-right:2.5px;"></div>
<div class="c" style="left:528px;top:580px;width:39px;height:13px;line-height:15px;background:#c6e4ec;border-right:1px solid #d8ecf2;border-bottom:1px solid #d8ecf2;text-align:right;padding-right:2.5px;"></div>
<div class="a" style="left:185.8px;top:501.36px;width:38px;height:15px;background:#fbeeb2"></div>
<div class="a" style="left:221.5px;top:503.46px;width:1px;height:11px;background:#222"></div>
<div class="a" style="left:567px;top:374.4px;width:15px;height:218px;background:#d9dde8"></div>
<svg class="a" style="left:570px;top:379px" width="9" height="5"><path d="M0.5 4.5l4-4 4 4z" fill="#5a6270"/></svg>
<div class="a" style="left:570.5px;top:460px;width:8px;height:15px;background:#a4a8b0"></div>
<svg class="a" style="left:570px;top:585px" width="9" height="5"><path d="M0.5 0.5l4 4 4-4z" fill="#5a6270"/></svg>
<div class="a" style="left:-2px;top:605.8px;width:100px;height:15.6px;background:#fff;border:1px solid #b8c0d0"></div>
<div class="a" style="left:0px;top:608px">ined</div>
<svg class="a" style="left:88px;top:612px" width="6" height="4"><path d="M0 0h5l-2.5 3z" fill="#505860"/></svg>
<div class="a" style="left:105.5px;top:605.8px;width:68px;height:15.6px;background:#fff;border:1px solid #b8c0d0"></div>
<div class="a" style="left:108px;top:608px">Auto</div>
<svg class="a" style="left:163px;top:612px" width="6" height="4"><path d="M0 0h5l-2.5 3z" fill="#505860"/></svg>
<div class="a" style="left:464.3px;top:608.4px;width:9px;height:9px;background:#fff;border:1px solid #9aa2b0"></div>
<div class="a" style="left:476px;top:607.5px;letter-spacing:-0.2px">Ignore Today's Trades</div>
<div class="a" style="left:-2px;top:624.2px;width:584.7px;height:52px;background:#fff;border:1px solid #c8ceda"></div>
<div class="c" style="left:-10px;top:625px;width:61px;height:18px;line-height:20px;background:#f7f9fc;border-right:1px solid #dde2ea;border-bottom:1px solid #dde2ea;text-align:center;line-height:17px">Cost</div>
<div class="c" style="left:51px;top:625px;width:53px;height:18px;line-height:20px;background:#f7f9fc;border-right:1px solid #dde2ea;border-bottom:1px solid #dde2ea;text-align:center;line-height:17px">Curr Cost</div>
<div class="c" style="left:104px;top:625px;width:54px;height:18px;line-height:20px;background:#f7f9fc;border-right:1px solid #dde2ea;border-bottom:1px solid #dde2ea;text-align:center;line-height:17px">Commis...</div>
<div class="c" style="left:158px;top:625px;width:52px;height:18px;line-height:20px;background:#f7f9fc;border-right:1px solid #dde2ea;border-bottom:1px solid #dde2ea;text-align:center;line-height:17px">PnL</div>
<div class="c" style="left:210px;top:625px;width:53px;height:18px;line-height:20px;background:#f7f9fc;border-right:1px solid #dde2ea;border-bottom:1px solid #dde2ea;text-align:center;line-height:17px">PnL%</div>
<div class="c" style="left:263px;top:625px;width:53px;height:18px;line-height:20px;background:#f7f9fc;border-right:1px solid #dde2ea;border-bottom:1px solid #dde2ea;text-align:center;line-height:17px">Delta</div>
<div class="c" style="left:316px;top:625px;width:52px;height:18px;line-height:20px;background:#f7f9fc;border-right:1px solid #dde2ea;border-bottom:1px solid #dde2ea;text-align:center;line-height:17px">Gamma</div>
<div class="c" style="left:368px;top:625px;width:53px;height:18px;line-height:20px;background:#f7f9fc;border-right:1px solid #dde2ea;border-bottom:1px solid #dde2ea;text-align:center;line-height:17px">Theta</div>
<div class="c" style="left:421px;top:625px;width:53px;height:18px;line-height:20px;background:#f7f9fc;border-right:1px solid #dde2ea;border-bottom:1px solid #dde2ea;text-align:center;line-height:17px">Vega</div>
<div class="c" style="left:474px;top:625px;width:53px;height:18px;line-height:20px;background:#f7f9fc;border-right:1px solid #dde2ea;border-bottom:1px solid #dde2ea;text-align:center;line-height:17px">T/D</div>
<div class="c" style="left:527px;top:625px;width:55px;height:18px;line-height:20px;background:#f7f9fc;border-right:1px solid #dde2ea;border-bottom:1px solid #dde2ea;text-align:center;line-height:17px">Plot</div>
<div class="c" style="left:-10px;top:643px;width:61px;height:16px;line-height:18px;border-right:1px solid #dde2ea;border-bottom:1px solid #dde2ea;text-align:right;padding-right:2.5px;">-1,874.95</div>
<div class="c" style="left:51px;top:643px;width:53px;height:16px;line-height:18px;border-right:1px solid #dde2ea;border-bottom:1px solid #dde2ea;text-align:right;padding-right:2.5px;">-81.25</div>
<div class="c" style="left:104px;top:643px;width:54px;height:16px;line-height:18px;border-right:1px solid #dde2ea;border-bottom:1px solid #dde2ea;text-align:right;padding-right:2.5px;">18.70</div>
<div class="c" style="left:158px;top:643px;width:52px;height:16px;line-height:18px;border-right:1px solid #dde2ea;border-bottom:1px solid #dde2ea;text-align:right;padding-right:2.5px;color:#ee2222;">-1,956.20</div>
<div class="c" style="left:210px;top:643px;width:53px;height:16px;line-height:18px;border-right:1px solid #dde2ea;border-bottom:1px solid #dde2ea;text-align:right;padding-right:2.5px;color:#ee2222;">-9.67%</div>
<div class="c" style="left:263px;top:643px;width:53px;height:16px;line-height:18px;border-right:1px solid #dde2ea;border-bottom:1px solid #dde2ea;text-align:right;padding-right:2.5px;">12.77</div>
<div class="c" style="left:316px;top:643px;width:52px;height:16px;line-height:18px;border-right:1px solid #dde2ea;border-bottom:1px solid #dde2ea;text-align:right;padding-right:2.5px;">-0.07</div>
<div class="c" style="left:368px;top:643px;width:53px;height:16px;line-height:18px;border-right:1px solid #dde2ea;border-bottom:1px solid #dde2ea;text-align:right;padding-right:2.5px;">73.08</div>
<div class="c" style="left:421px;top:643px;width:53px;height:16px;line-height:18px;border-right:1px solid #dde2ea;border-bottom:1px solid #dde2ea;text-align:right;padding-right:2.5px;">112.79</div>
<div class="c" style="left:474px;top:643px;width:53px;height:16px;line-height:18px;border-right:1px solid #dde2ea;border-bottom:1px solid #dde2ea;text-align:right;padding-right:2.5px;">5.7</div>
<div class="c" style="left:527px;top:643px;width:55px;height:16px;line-height:18px;border-right:1px solid #dde2ea;border-bottom:1px solid #dde2ea;text-align:center;"></div>
<svg class="a" style="left:549.3px;top:645.1px" width="11" height="11"><rect x="0.5" y="0.5" width="10" height="10" fill="#fff" stroke="#a0a8b4"/><path d="M2.5 5.5l2 2 4-4.5" fill="none" stroke="#404850" stroke-width="1.1"/></svg>
<div class="c" style="left:-10px;top:659px;width:61px;height:16px;line-height:18px;border-right:1px solid #dde2ea;border-bottom:1px solid #dde2ea;text-align:right;padding-right:2.5px;">-3,120.40</div>
<div class="c" style="left:51px;top:659px;width:53px;height:16px;line-height:18px;border-right:1px solid #dde2ea;border-bottom:1px solid #dde2ea;text-align:right;padding-right:2.5px;">1,162.50</div>
<div class="c" style="left:104px;top:659px;width:54px;height:16px;line-height:18px;border-right:1px solid #dde2ea;border-bottom:1px solid #dde2ea;text-align:right;padding-right:2.5px;">20.40</div>
<div class="c" style="left:158px;top:659px;width:52px;height:16px;line-height:18px;border-right:1px solid #dde2ea;border-bottom:1px solid #dde2ea;text-align:right;padding-right:2.5px;color:#ee2222;">-1,957.90</div>
<div class="c" style="left:210px;top:659px;width:53px;height:16px;line-height:18px;border-right:1px solid #dde2ea;border-bottom:1px solid #dde2ea;text-align:right;padding-right:2.5px;color:#ee2222;">-10.92%</div>
<div class="c" style="left:263px;top:659px;width:53px;height:16px;line-height:18px;border-right:1px solid #dde2ea;border-bottom:1px solid #dde2ea;text-align:right;padding-right:2.5px;">7.41</div>
<div class="c" style="left:316px;top:659px;width:52px;height:16px;line-height:18px;border-right:1px solid #dde2ea;border-bottom:1px solid #dde2ea;text-align:right;padding-right:2.5px;">-0.06</div>
<div class="c" style="left:368px;top:659px;width:53px;height:16px;line-height:18px;border-right:1px solid #dde2ea;border-bottom:1px solid #dde2ea;text-align:right;padding-right:2.5px;">70.49</div>
<div class="c" style="left:421px;top:659px;width:53px;height:16px;line-height:18px;border-right:1px solid #dde2ea;border-bottom:1px solid #dde2ea;text-align:right;padding-right:2.5px;">155.36</div>
<div class="c" style="left:474px;top:659px;width:53px;height:16px;line-height:18px;border-right:1px solid #dde2ea;border-bottom:1px solid #dde2ea;text-align:right;padding-right:2.5px;">9.5</div>
<div class="c" style="left:527px;top:659px;width:55px;height:16px;line-height:18px;border-right:1px solid #dde2ea;border-bottom:1px solid #dde2ea;text-align:center;"></div>
<svg class="a" style="left:549.3px;top:661.3px" width="11" height="11"><rect x="0.5" y="0.5" width="10" height="10" fill="#fff" stroke="#a0a8b4"/><path d="M2.5 5.5l2 2 4-4.5" fill="none" stroke="#404850" stroke-width="1.1"/></svg>
<div class="a" style="left:593px;top:137px;width:487px;height:517px;background:#d4d9e7;border-left:1px solid #a8b0c0"></div>
<div class="a" style="left:658px;top:161px;width:422px;height:1px;background:#a8b0c0"></div>
<div class="a" style="left:593px;top:139.4px;width:66.4px;height:23px;background:#d4d9e7;border:1px solid #aeb6c6;border-bottom:none; text-align:center;line-height:20px">Risk Chart</div>
<div class="a" style="left:658.4px;top:139.4px;width:67.6px;height:22px;background:#d3d8e4;border:1px solid #aeb6c6; text-align:center;line-height:20px">Price Chart</div>
<div class="a" style="left:725px;top:139.4px;width:106px;height:22px;background:#d3d8e4;border:1px solid #aeb6c6; text-align:center;line-height:20px">Movement Analysis</div>
<div class="a" style="left:830px;top:139.4px;width:56.6px;height:22px;background:#d3d8e4;border:1px solid #aeb6c6; text-align:center;line-height:20px">Volatility</div>
<div class="a" style="left:885.6px;top:139.4px;width:135px;height:22px;background:#d3d8e4;border:1px solid #aeb6c6; text-align:center;line-height:20px">Statistics &amp; Fundamentals</div>
<div class="a" style="left:599px;top:166px">Vol Adjust</div>
<div class="a" style="left:647.3px;top:163.4px;width:45.4px;height:16px;background:#fff;border:1px solid #c0c8d4"></div>
<div class="a" style="left:670px;top:166px">0</div>
<svg class="a" style="left:683px;top:165px" width="8" height="13"><path d="M1.5 4.5l2.5-2.5 2.5 2.5z" fill="#404854"/><path d="M1.5 8.5l2.5 2.5 2.5-2.5z" fill="#404854"/></svg>
<div class="a" style="left:985px;top:166px">Projection</div>
<div class="a" style="left:1032px;top:163.4px;width:60px;height:16px;background:#fff;border:1px solid #c0c8d4"></div>
<div class="a" style="left:1035px;top:166px">03/02/2025</div>
<div class="a" style="left:594px;top:183px;width:486px;height:470px;background:#fff"></div>
<svg class="a" style="left:0;top:0" width="1080" height="675" viewBox="0 0 1080 675">
<rect x="952" y="198.3" width="67.8" height="275.3" fill="#93cadb"/>
<rect x="1019.8" y="198.3" width="70" height="275.3" fill="#4f81bd"/>
<path d="M638 473.19H952" stroke="#e2e2e2" stroke-width="1"/>
<path d="M952 473.19H1080" stroke="#d6d6d6" stroke-opacity="0.85" stroke-width="1"/>
<path d="M638 454.88H952" stroke="#e2e2e2" stroke-width="1"/>
<path d="M952 454.88H1080" stroke="#d6d6d6" stroke-opacity="0.85" stroke-width="1"/>
<path d="M638 436.56H952" stroke="#e2e2e2" stroke-width="1"/>
<path d="M952 436.56H1080" stroke="#d6d6d6" stroke-opacity="0.85" stroke-width="1"/>
<path d="M638 418.25H952" stroke="#e2e2e2" stroke-width="1"/>
<path d="M952 418.25H1080" stroke="#d6d6d6" stroke-opacity="0.85" stroke-width="1"/>
<path d="M638 399.94H952" stroke="#e2e2e2" stroke-width="1"/>
<path d="M952 399.94H1080" stroke="#d6d6d6" stroke-opacity="0.85" stroke-width="1"/>
<path d="M638 381.62H952" stroke="#e2e2e2" stroke-width="1"/>
<path d="M952 381.62H1080" stroke="#d6d6d6" stroke-opacity="0.85" stroke-width="1"/>
<path d="M638 363.31H952" stroke="#e2e2e2" stroke-width="1"/>
<path d="M952 363.31H1080" stroke="#d6d6d6" stroke-opacity="0.85" stroke-width="1"/>
<path d="M638 345H952" stroke="#e2e2e2" stroke-width="1"/>
<path d="M952 345H1080" stroke="#d6d6d6" stroke-opacity="0.85" stroke-width="1"/>
<path d="M638 326.69H952" stroke="#e2e2e2" stroke-width="1"/>
<path d="M952 326.69H1080" stroke="#d6d6d6" stroke-opacity="0.85" stroke-width="1"/>
<path d="M638 308.38H952" stroke="#e2e2e2" stroke-width="1"/>
<path d="M952 308.38H1080" stroke="#d6d6d6" stroke-opacity="0.85" stroke-width="1"/>
<path d="M638 290.06H952" stroke="#e2e2e2" stroke-width="1"/>
<path d="M952 290.06H1080" stroke="#d6d6d6" stroke-opacity="0.85" stroke-width="1"/>
<path d="M638 271.75H952" stroke="#e2e2e2" stroke-width="1"/>
<path d="M952 271.75H1080" stroke="#d6d6d6" stroke-opacity="0.85" stroke-width="1"/>
<path d="M638 253.44H952" stroke="#e2e2e2" stroke-width="1"/>
<path d="M952 253.44H1080" stroke="#d6d6d6" stroke-opacity="0.85" stroke-width="1"/>
<path d="M638 235.12H952" stroke="#e2e2e2" stroke-width="1"/>
<path d="M952 235.12H1080" stroke="#d6d6d6" stroke-opacity="0.85" stroke-width="1"/>
<path d="M638 216.81H952" stroke="#e2e2e2" stroke-width="1"/>
<path d="M952 216.81H1080" stroke="#d6d6d6" stroke-opacity="0.85" stroke-width="1"/>
<path d="M638 198.5H952" stroke="#e2e2e2" stroke-width="1"/>
<path d="M952 198.5H1080" stroke="#d6d6d6" stroke-opacity="0.85" stroke-width="1"/>
<path d="M641.5 198V476" stroke="#e2e2e2"/>
<path d="M645.6 198V478" stroke="#e2e2e2" stroke-opacity="1"/>
<path d="M716.1 198V478" stroke="#e2e2e2" stroke-opacity="1"/>
<path d="M786.6 198V478" stroke="#e2e2e2" stroke-opacity="1"/>
<path d="M857.1 198V478" stroke="#e2e2e2" stroke-opacity="1"/>
<path d="M927.6 198V478" stroke="#e2e2e2" stroke-opacity="1"/>
<path d="M998.1 198V478" stroke="#d6d6d6" stroke-opacity="0.85"/>
<path d="M1068.6 198V478" stroke="#d6d6d6" stroke-opacity="0.85"/>
<text x="0" y="0" transform="translate(961.8 232.8) rotate(-90)" font-family="Liberation Sans" font-size="9.3" fill="#5d9fc4">5967.45</text>
<text x="0" y="0" transform="translate(1029.5 232.8) rotate(-90)" font-family="Liberation Sans" font-size="9.3" fill="#8fb3de">6015.60</text>
<path d="M641 345.5H1080" stroke="#222" stroke-width="1" stroke-opacity="0.85"/>
<path d="M641 427.88 L647 425.29 L653 422.77 L659 420.31 L665 417.9 L671 415.56 L677 413.27 L683 411.05 L689 408.87 L695 406.75 L701 404.69 L707 402.68 L713 400.72 L719 398.81 L725 396.95 L731 395.14 L737 393.38 L743 391.67 L749 390 L755 388.38 L761 386.8 L767 385.27 L773 383.78 L779 382.33 L785 380.92 L791 379.55 L797 378.22 L803 376.92 L809 375.66 L815 374.44 L821 373.25 L827 372.1 L833 370.98 L839 369.89 L845 368.83 L851 367.8 L857 366.8 L863 365.83 L869 364.88 L875 363.97 L881 363.07 L887 362.2 L893 361.35 L899 360.53 L905 359.72 L911 358.94 L917 358.18 L923 357.43 L929 356.7 L935 355.99 L941 355.29 L947 354.61 L953 353.94 L959 353.28 L965 352.63 L971 352 L977 351.37 L983 350.76 L989 350.15 L995 349.54 L1001 348.95 L1007 348.35 L1013 347.76 L1019 347.18 L1025 346.59 L1031 346.01 L1037 345.43 L1043 344.84 L1049 344.25 L1055 343.66 L1061 343.07 L1067 342.47 L1073 341.87 L1079 341.25 L1080 341.15" fill="none" stroke="#f52a2a" stroke-opacity="0.85" stroke-width="1.15"/>
<path d="M641 438.19 L647 436.57 L653 434.96 L659 433.38 L665 431.82 L671 430.28 L677 428.76 L683 427.26 L689 425.79 L695 424.33 L701 422.89 L707 421.48 L713 420.08 L719 418.71 L725 417.35 L731 416.02 L737 414.71 L743 413.42 L749 412.15 L755 410.9 L761 409.67 L767 408.46 L773 407.27 L779 406.1 L785 404.96 L791 403.83 L797 402.73 L803 401.64 L809 400.58 L815 399.54 L821 398.51 L827 397.51 L833 396.53 L839 395.57 L845 394.63 L851 393.72 L857 392.82 L863 391.94 L869 391.08 L875 390.25 L881 389.43 L887 388.64 L893 387.87 L899 387.11 L905 386.38 L911 385.67 L917 384.98 L923 384.31 L929 383.66 L935 383.03 L941 382.43 L947 381.84 L953 381.27 L954.3 381" fill="none" stroke="#f52a2a" stroke-opacity="0.85" stroke-width="1.15"/>
<path d="M641 461.1 L647 458.06 L653 455.06 L659 452.08 L665 449.14 L671 446.23 L677 443.35 L683 440.51 L689 437.72 L695 434.96 L701 432.24 L707 429.56 L713 426.93 L719 424.35 L725 421.81 L731 419.29 L737 416.79 L743 414.32 L749 411.87 L755 409.45 L761 407.07 L767 404.71 L773 402.38 L779 400.09 L785 397.84 L791 395.62 L797 393.45 L803 391.31 L809 389.22 L815 387.17 L821 385.17 L827 383.2 L833 381.28 L839 379.41 L845 377.61 L851 375.89 L857 374.27 L863 372.74 L869 371.22 L875 369.71 L881 368.22 L887 366.76 L893 365.35 L899 364.01 L905 362.74 L911 361.56 L917 360.5 L923 359.55 L929 358.74 L935 358.04 L941 357.38 L947 356.74 L953 356.15 L959 355.63 L965 355.18 L971 354.83 L977 354.58 L983 354.44 L989 354.32 L995 354.2 L1001 354.1 L1007 354 L1013 353.91 L1019 353.82 L1025 353.74 L1031 353.67 L1037 353.61 L1043 353.56 L1049 353.51 L1055 353.47 L1061 353.44 L1067 353.42 L1073 353.41 L1079 353.4 L1080 353.4" fill="none" stroke="#f52a2a" stroke-opacity="0.85" stroke-width="1.15"/>
<path d="M641 464.4 L647 462.21 L653 460.03 L659 457.88 L665 455.76 L671 453.66 L677 451.58 L683 449.52 L689 447.49 L695 445.48 L701 443.5 L707 441.53 L713 439.59 L719 437.68 L725 435.79 L731 433.92 L737 432.08 L743 430.25 L749 428.46 L755 426.68 L761 424.93 L767 423.2 L773 421.5 L779 419.82 L785 418.16 L791 416.53 L797 414.92 L803 413.33 L809 411.77 L815 410.23 L821 408.71 L827 407.22 L833 405.75 L839 404.3 L845 402.88 L851 401.48 L857 400.1 L863 398.75 L869 397.42 L875 396.11 L881 394.83 L887 393.57 L893 392.34 L899 391.12 L905 389.94 L911 388.77 L917 387.63 L923 386.51 L929 385.42 L935 384.34 L941 383.3 L947 382.27 L953 381.27 L954.3 381" fill="none" stroke="#f52a2a" stroke-opacity="0.85" stroke-width="1.15"/>
<path d="M908.5 390.6L982 375.3" stroke="#f5a070" stroke-opacity="0.55" stroke-width="5"/>
<path d="M954.3 381 C965.25 379.33 999.05 373.67 1020 371 C1040.95 368.33 1070 366 1080 365" fill="none" stroke="#6a9be0" stroke-width="1"/>
<path d="M954.3 381 C965.25 380.08 999.05 376.92 1020 375.5 C1040.95 374.08 1070 373 1080 372.5" fill="none" stroke="#50b050" stroke-width="1"/>
<path d="M641 349L717 211L822.6 210.6" fill="none" stroke="#218a21" stroke-width="1.9"/>
<path d="M822.6 210.6 C832.17 216.1 858.43 232.7 880 243.6 C901.57 254.5 928.67 265.98 952 276 C975.33 286.02 998.67 295.77 1020 303.7 C1041.33 311.63 1070 320.28 1080 323.6" fill="none" stroke="#218a21" stroke-width="1.9"/>
<path d="M641 418L716 279.2L822.6 210.6L857 207.3" fill="none" stroke="#4848cc" stroke-width="1.8"/>
<path d="M857 207.3 C860.83 209.4 865.6 212.78 880 219.9 C894.4 227.02 920.1 239.98 943.4 250 C966.7 260.02 997.03 271.7 1019.8 280 C1042.57 288.3 1069.97 296.5 1080 299.8" fill="none" stroke="#4848cc" stroke-width="1.8"/>
<circle cx="954.3" cy="381" r="2.9" fill="#e80000" stroke="#300000" stroke-width="0.8"/>
<rect x="645.5" y="203.5" width="138.5" height="116.5" rx="4" fill="#e6edf8" fill-opacity="0.82" stroke="#98a6b8" stroke-width="1"/>
</svg>
<div class="a" style="left:652.3px;top:210.2px;width:3px;height:10px;background:#ee3333"></div>
<div class="a ch" style="left:655px;top:210.2px;color:#555">-812.45 Realized PnL</div>
<div class="a" style="left:652.3px;top:221.9px;width:3px;height:10px;background:#55cc55"></div>
<div class="a ch" style="left:655px;top:221.9px;color:#444;font-size:9px">+1 <span style="color:#5a5af0">03mar. 5900 Put Δ</span></div>
<div class="a ch" style="left:730px;width:47.5px;text-align:right;top:221.9px;color:#5a5af0">-36.97</div>
<div class="a" style="left:652.3px;top:233.6px;width:3px;height:10px;background:#55cc55"></div>
<div class="a ch" style="left:655px;top:233.6px;color:#444;font-size:9px">-1 <span style="color:#f05555">03mar. 5800 Put Δ</span></div>
<div class="a ch" style="left:730px;width:45px;text-align:right;top:233.6px;color:#f05555">-26.25</div>
<div class="a" style="left:652.3px;top:245.3px;width:3px;height:10px;background:#7aa2ee"></div>
<div class="a ch" style="left:655px;top:245.3px;color:#444;font-size:9px">+2 <span style="color:#5a5af0">03mar. 5700 Put Δ</span></div>
<div class="a ch" style="left:730px;width:47.5px;text-align:right;top:245.3px;color:#5a5af0">-18.34</div>
<div class="a" style="left:652.3px;top:257px;width:3px;height:10px;background:#7aa2ee"></div>
<div class="a ch" style="left:655px;top:257px;color:#444;font-size:9px">+1 <span style="color:#5a5af0">31mar. 5850 Put Δ</span></div>
<div class="a ch" style="left:730px;width:47.5px;text-align:right;top:257px;color:#5a5af0">-21.87</div>
<div class="a" style="left:652.3px;top:268.7px;width:3px;height:10px;background:#7aa2ee"></div>
<div class="a ch" style="left:655px;top:268.7px;color:#444;font-size:9px">+1 <span style="color:#5a5af0">31mar. 5875 Put Δ</span></div>
<div class="a ch" style="left:730px;width:47.5px;text-align:right;top:268.7px;color:#5a5af0">-23.39</div>
<div class="a" style="left:652.3px;top:280.4px;width:3px;height:10px;background:#7aa2ee"></div>
<div class="a ch" style="left:655px;top:280.4px;color:#444;font-size:9px">-2 <span style="color:#f05555">03mar. 5800 Put Δ</span></div>
<div class="a ch" style="left:730px;width:45px;text-align:right;top:280.4px;color:#f05555">-26.25</div>
<div class="a" style="left:652.3px;top:292.1px;width:3px;height:10px;background:#7aa2ee"></div>
<div class="a ch" style="left:655px;top:292.1px;color:#444;font-size:9px">-1 <span style="color:#f05555">03mar. 5875 Put Δ</span></div>
<div class="a ch" style="left:730px;width:45px;text-align:right;top:292.1px;color:#f05555">-34.01</div>
<div class="a" style="left:652.3px;top:303.8px;width:3px;height:10px;background:#7aa2ee"></div>
<div class="a ch" style="left:655px;top:303.8px;color:#444;font-size:9px">-1 <span style="color:#f05555">03mar. 5900 Put Δ</span></div>
<div class="a ch" style="left:730px;width:45px;text-align:right;top:303.8px;color:#f05555">-36.97</div>
<svg class="a" style="left:0;top:0" width="1080" height="675"><rect x="645.6" y="423" width="97" height="46.6" rx="4" fill="#e6edf8" fill-opacity="0.85" stroke="#98a6b8"/></svg>
<div class="a ch" style="left:653px;top:429.9px;color:#4c9a4c">03/03/2025 (0)</div>
<div class="a ch" style="left:653px;top:441.7px;color:#f06a6a">17/02/2025 (14) T+14</div>
<div class="a ch" style="left:653px;top:453.2px;color:#5cc65c">03/02/2025 (28) T+0</div>
<div class="a ch" style="left:590px;width:45.7px;text-align:right;top:469.19px;color:#333">-35%</div>
<div class="a ch" style="left:590px;width:45.7px;text-align:right;top:450.88px;color:#333">-30%</div>
<div class="a ch" style="left:590px;width:45.7px;text-align:right;top:432.56px;color:#333">-25%</div>
<div class="a ch" style="left:590px;width:45.7px;text-align:right;top:414.25px;color:#333">-20%</div>
<div class="a ch" style="left:590px;width:45.7px;text-align:right;top:395.94px;color:#333">-15%</div>
<div class="a" style="left:599.3px;top:374.6px;width:38.6px;height:11px;background:#d40000"></div>
<div class="a ch" style="left:590px;width:45.7px;text-align:right;top:377.62px;color:#fff">-10%</div>
<div class="a ch" style="left:590px;width:45.7px;text-align:right;top:359.31px;color:#333">-5%</div>
<div class="a ch" style="left:590px;width:45.7px;text-align:right;top:341px;color:#333">0%</div>
<div class="a ch" style="left:590px;width:45.7px;text-align:right;top:322.69px;color:#333">5%</div>
<div class="a ch" style="left:590px;width:45.7px;text-align:right;top:304.38px;color:#333">10%</div>
<div class="a ch" style="left:590px;width:45.7px;text-align:right;top:286.06px;color:#333">15%</div>
<div class="a ch" style="left:590px;width:45.7px;text-align:right;top:267.75px;color:#333">20%</div>
<div class="a ch" style="left:590px;width:45.7px;text-align:right;top:249.44px;color:#333">25%</div>
<div class="a ch" style="left:590px;width:45.7px;text-align:right;top:231.12px;color:#333">30%</div>
<div class="a ch" style="left:590px;width:45.7px;text-align:right;top:212.81px;color:#333">35%</div>
<div class="a ch" style="left:590px;width:45.7px;text-align:right;top:194.5px;color:#333">40%</div>
<div class="a ch" style="left:625.6px;width:40px;text-align:center;top:185px;color:#333">-5.2%</div>
<div class="a ch" style="left:696.1px;width:40px;text-align:center;top:185px;color:#333">-4.3%</div>
<div class="a ch" style="left:766.6px;width:40px;text-align:center;top:185px;color:#333">-3.5%</div>
<div class="a ch" style="left:837.1px;width:40px;text-align:center;top:185px;color:#333">-2.7%</div>
<div class="a ch" style="left:907.6px;width:40px;text-align:center;top:185px;color:#333">-1.9%</div>
<div class="a ch" style="left:978.1px;width:40px;text-align:center;top:185px;color:#333">-1.1%</div>
<div class="a ch" style="left:1048.6px;width:40px;text-align:center;top:185px;color:#333">-0.2%</div>
<div class="a ch" style="left:940.4px;top:182.8px;width:28.4px;height:11px;border:1px solid #7c8898;border-radius:1px;background:#e6eef8;line-height:9.5px;text-align:center;color:#333;font-size:9.2px">-1.6%</div>
<div class="a ch" style="left:625.6px;width:40px;text-align:center;top:478px;color:#333">5750</div>
<div class="a ch" style="left:696.1px;width:40px;text-align:center;top:478px;color:#333">5800</div>
<div class="a ch" style="left:766.6px;width:40px;text-align:center;top:478px;color:#333">5850</div>
<div class="a ch" style="left:837.1px;width:40px;text-align:center;top:478px;color:#333">5900</div>
<div class="a ch" style="left:907.6px;width:40px;text-align:center;top:478px;color:#333">5950</div>
<div class="a ch" style="left:978.1px;width:40px;text-align:center;top:478px;color:#333">6000</div>
<div class="a ch" style="left:1048.6px;width:40px;text-align:center;top:478px;color:#333">6050</div>
<div class="a" style="left:597.3px;top:492px;width:490px;height:159.3px;background:#e8eef8;border:1px solid #8e9aaa;border-radius:4px"></div>
<div class="a ch" style="left:590px;width:59px;text-align:center;top:511.5px;color:#555">PnL</div>
<div class="a ch" style="left:590px;width:59px;text-align:center;top:547.6px;color:#555">Delta</div>
<div class="a ch" style="left:590px;width:59px;text-align:center;top:575px;color:#555">Gamma</div>
<div class="a ch" style="left:590px;width:59px;text-align:center;top:602.5px;color:#555">Theta</div>
<div class="a ch" style="left:590px;width:59px;text-align:center;top:630.6px;color:#555">Vega</div>
<div class="a" style="left:642px;top:515.5px;width:41.4px;height:9.2px;background:#f07474;border:1px solid #666c76"></div>
<div class="a" style="left:682.4px;top:515.5px;width:71.9px;height:7.46px;background:#f07474;border:1px solid #666c76"></div>
<div class="a" style="left:753.3px;top:515.5px;width:71.4px;height:5.98px;background:#f07474;border:1px solid #666c76"></div>
<div class="a" style="left:823.7px;top:515.5px;width:71.5px;height:4.77px;background:#f07474;border:1px solid #666c76"></div>
<div class="a" style="left:894.2px;top:515.5px;width:71.4px;height:3.86px;background:#f07474;border:1px solid #666c76"></div>
<div class="a" style="left:964.6px;top:515.5px;width:71.4px;height:3.21px;background:#f07474;border:1px solid #666c76"></div>
<div class="a" style="left:1035px;top:515.5px;width:71px;height:2.81px;background:#f07474;border:1px solid #666c76"></div>
<div class="a" style="left:642px;top:543.3px;width:41.4px;height:9.3px;background:#5a78f2;border:1px solid #666c76"></div>
<div class="a" style="left:682.4px;top:544.51px;width:71.9px;height:8.09px;background:#5a78f2;border:1px solid #666c76"></div>
<div class="a" style="left:753.3px;top:545.88px;width:71.4px;height:6.72px;background:#5a78f2;border:1px solid #666c76"></div>
<div class="a" style="left:823.7px;top:547.3px;width:71.5px;height:5.3px;background:#5a78f2;border:1px solid #666c76"></div>
<div class="a" style="left:894.2px;top:548.71px;width:71.4px;height:3.89px;background:#5a78f2;border:1px solid #666c76"></div>
<div class="a" style="left:964.6px;top:550.01px;width:71.4px;height:2.59px;background:#5a78f2;border:1px solid #666c76"></div>
<div class="a" style="left:1035px;top:551.16px;width:71px;height:1.44px;background:#5a78f2;border:1px solid #666c76"></div>
<div class="a" style="left:642px;top:580px;width:41.4px;height:6.67px;background:#f07474;border:1px solid #666c76"></div>
<div class="a" style="left:682.4px;top:580px;width:71.9px;height:8px;background:#f07474;border:1px solid #666c76"></div>
<div class="a" style="left:753.3px;top:580px;width:71.4px;height:8px;background:#f07474;border:1px solid #666c76"></div>
<div class="a" style="left:823.7px;top:580px;width:71.5px;height:8px;background:#f07474;border:1px solid #666c76"></div>
<div class="a" style="left:894.2px;top:580px;width:71.4px;height:8px;background:#f07474;border:1px solid #666c76"></div>
<div class="a" style="left:964.6px;top:580px;width:71.4px;height:6.67px;background:#f07474;border:1px solid #666c76"></div>
<div class="a" style="left:1035px;top:580px;width:71px;height:6.67px;background:#f07474;border:1px solid #666c76"></div>
<div class="a" style="left:642px;top:602.98px;width:41.4px;height:4.02px;background:#5a78f2;border:1px solid #666c76"></div>
<div class="a" style="left:682.4px;top:600.64px;width:71.9px;height:6.36px;background:#5a78f2;border:1px solid #666c76"></div>
<div class="a" style="left:753.3px;top:598.94px;width:71.4px;height:8.06px;background:#5a78f2;border:1px solid #666c76"></div>
<div class="a" style="left:823.7px;top:597.96px;width:71.5px;height:9.04px;background:#5a78f2;border:1px solid #666c76"></div>
<div class="a" style="left:894.2px;top:597.7px;width:71.4px;height:9.3px;background:#5a78f2;border:1px solid #666c76"></div>
<div class="a" style="left:964.6px;top:598.09px;width:71.4px;height:8.91px;background:#5a78f2;border:1px solid #666c76"></div>
<div class="a" style="left:1035px;top:598.99px;width:71px;height:8.01px;background:#5a78f2;border:1px solid #666c76"></div>
<div class="a" style="left:642px;top:625.8px;width:41.4px;height:8.4px;background:#5a78f2;border:1px solid #666c76"></div>
<div class="a" style="left:682.4px;top:627.19px;width:71.9px;height:7.01px;background:#5a78f2;border:1px solid #666c76"></div>
<div class="a" style="left:753.3px;top:628.27px;width:71.4px;height:5.93px;background:#5a78f2;border:1px solid #666c76"></div>
<div class="a" style="left:823.7px;top:628.99px;width:71.5px;height:5.21px;background:#5a78f2;border:1px solid #666c76"></div>
<div class="a" style="left:894.2px;top:629.36px;width:71.4px;height:4.84px;background:#5a78f2;border:1px solid #666c76"></div>
<div class="a" style="left:964.6px;top:629.42px;width:71.4px;height:4.78px;background:#5a78f2;border:1px solid #666c76"></div>
<div class="a" style="left:1035px;top:629.24px;width:71px;height:4.96px;background:#5a78f2;border:1px solid #666c76"></div>
<div class="a ch" style="left:626.3px;width:40px;text-align:center;top:497px;color:#f07070;">-25%</div>
<div class="a ch" style="left:626.3px;width:40px;text-align:center;top:507.3px;color:#f07070;">-5031</div>
<div class="a ch" style="left:626.3px;width:40px;text-align:center;top:552.6px;color:#6a74f0;">20.33</div>
<div class="a ch" style="left:626.3px;width:40px;text-align:center;top:570.7px;color:#f07070;">-0.05</div>
<div class="a ch" style="left:626.3px;width:40px;text-align:center;top:607.5px;color:#6a74f0;">30.70</div>
<div class="a ch" style="left:626.3px;width:40px;text-align:center;top:635px;color:#6a74f0;">272.75</div>
<div class="a ch" style="left:697.3px;width:40px;text-align:center;top:497px;color:#f07070;">-20%</div>
<div class="a ch" style="left:697.3px;width:40px;text-align:center;top:507.3px;color:#f07070;">-4079</div>
<div class="a ch" style="left:697.3px;width:40px;text-align:center;top:552.6px;color:#6a74f0;">17.68</div>
<div class="a ch" style="left:697.3px;width:40px;text-align:center;top:570.7px;color:#f07070;">-0.06</div>
<div class="a ch" style="left:697.3px;width:40px;text-align:center;top:607.5px;color:#6a74f0;">48.58</div>
<div class="a ch" style="left:697.3px;width:40px;text-align:center;top:635px;color:#6a74f0;">227.68</div>
<div class="a ch" style="left:768px;width:40px;text-align:center;top:497px;color:#f07070;">-16%</div>
<div class="a ch" style="left:768px;width:40px;text-align:center;top:507.3px;color:#f07070;">-3269</div>
<div class="a ch" style="left:768px;width:40px;text-align:center;top:552.6px;color:#6a74f0;">14.70</div>
<div class="a ch" style="left:768px;width:40px;text-align:center;top:570.7px;color:#f07070;">-0.06</div>
<div class="a ch" style="left:768px;width:40px;text-align:center;top:607.5px;color:#6a74f0;">61.58</div>
<div class="a ch" style="left:768px;width:40px;text-align:center;top:635px;color:#6a74f0;">192.57</div>
<div class="a ch" style="left:838px;width:40px;text-align:center;top:497px;color:#f07070;">-13%</div>
<div class="a ch" style="left:838px;width:40px;text-align:center;top:507.3px;color:#f07070;">-2611</div>
<div class="a ch" style="left:838px;width:40px;text-align:center;top:552.6px;color:#6a74f0;">11.59</div>
<div class="a ch" style="left:838px;width:40px;text-align:center;top:570.7px;color:#f07070;">-0.06</div>
<div class="a ch" style="left:838px;width:40px;text-align:center;top:607.5px;color:#6a74f0;">69.07</div>
<div class="a ch" style="left:838px;width:40px;text-align:center;top:635px;color:#6a74f0;">169.06</div>
<div class="a ch" style="left:908.6px;width:40px;text-align:center;top:497px;color:#f07070;">-10%</div>
<div class="a ch" style="left:908.6px;width:40px;text-align:center;top:507.3px;color:#f07070;">-2109</div>
<div class="a ch" style="left:908.6px;width:40px;text-align:center;top:552.6px;color:#6a74f0;">8.50</div>
<div class="a ch" style="left:908.6px;width:40px;text-align:center;top:570.7px;color:#f07070;">-0.06</div>
<div class="a ch" style="left:908.6px;width:40px;text-align:center;top:607.5px;color:#6a74f0;">71.07</div>
<div class="a ch" style="left:908.6px;width:40px;text-align:center;top:635px;color:#6a74f0;">157.13</div>
<div class="a ch" style="left:979px;width:40px;text-align:center;top:497px;color:#f07070;">-9%</div>
<div class="a ch" style="left:979px;width:40px;text-align:center;top:507.3px;color:#f07070;">-1755</div>
<div class="a ch" style="left:979px;width:40px;text-align:center;top:552.6px;color:#6a74f0;">5.67</div>
<div class="a ch" style="left:979px;width:40px;text-align:center;top:570.7px;color:#f07070;">-0.05</div>
<div class="a ch" style="left:979px;width:40px;text-align:center;top:607.5px;color:#6a74f0;">68.12</div>
<div class="a ch" style="left:979px;width:40px;text-align:center;top:635px;color:#6a74f0;">155.30</div>
<div class="a ch" style="left:1049px;width:40px;text-align:center;top:497px;color:#f07070;">-8%</div>
<div class="a ch" style="left:1049px;width:40px;text-align:center;top:507.3px;color:#f07070;">-1536</div>
<div class="a ch" style="left:1049px;width:40px;text-align:center;top:552.6px;color:#6a74f0;">3.15</div>
<div class="a ch" style="left:1049px;width:40px;text-align:center;top:570.7px;color:#f07070;">-0.05</div>
<div class="a ch" style="left:1049px;width:40px;text-align:center;top:607.5px;color:#6a74f0;">61.21</div>
<div class="a ch" style="left:1049px;width:40px;text-align:center;top:635px;color:#6a74f0;">161.05</div>
<div class="a" style="left:933.5px;top:478px;width:42.2px;height:171px;background:rgba(232,238,248,0.93);border:1px solid #8a96a8;border-radius:4px"></div>
<div class="a ch" style="left:933.5px;width:42px;text-align:center;top:479px;color:#333">5969.00</div>
<div class="a ch" style="left:933.5px;width:42px;text-align:center;top:507px;color:#ee3030;font-size:9.2px">-1,958</div>
<div class="a ch" style="left:933.5px;width:42px;text-align:center;top:520.7px;color:#ee3030;font-size:9.2px">-9.7%</div>
<div class="a ch" style="left:933.5px;width:42px;text-align:center;top:548px;color:#3a3ae8;font-size:9.2px">7.41</div>
<div class="a ch" style="left:933.5px;width:42px;text-align:center;top:575px;color:#ee3030;font-size:9.2px">-0.06</div>
<div class="a ch" style="left:933.5px;width:42px;text-align:center;top:602.5px;color:#3a3ae8;font-size:9.2px">70.49</div>
<div class="a ch" style="left:933.5px;width:42px;text-align:center;top:630.5px;color:#3a3ae8;font-size:9.2px">155.36</div>
<div class="a" style="left:594px;top:653.8px;width:486px;height:21.2px;background:#283552"></div>
<div class="a" style="left:594px;top:674px;width:486px;height:1px;background:#8a909c"></div>
<div class="a" style="left:1040px;top:658px;color:#fff;font-size:11.5px">500%</div>
<div class="a" style="left:1073px;top:664px;width:7px;height:1px;background:#fff"></div>
</body></html>
